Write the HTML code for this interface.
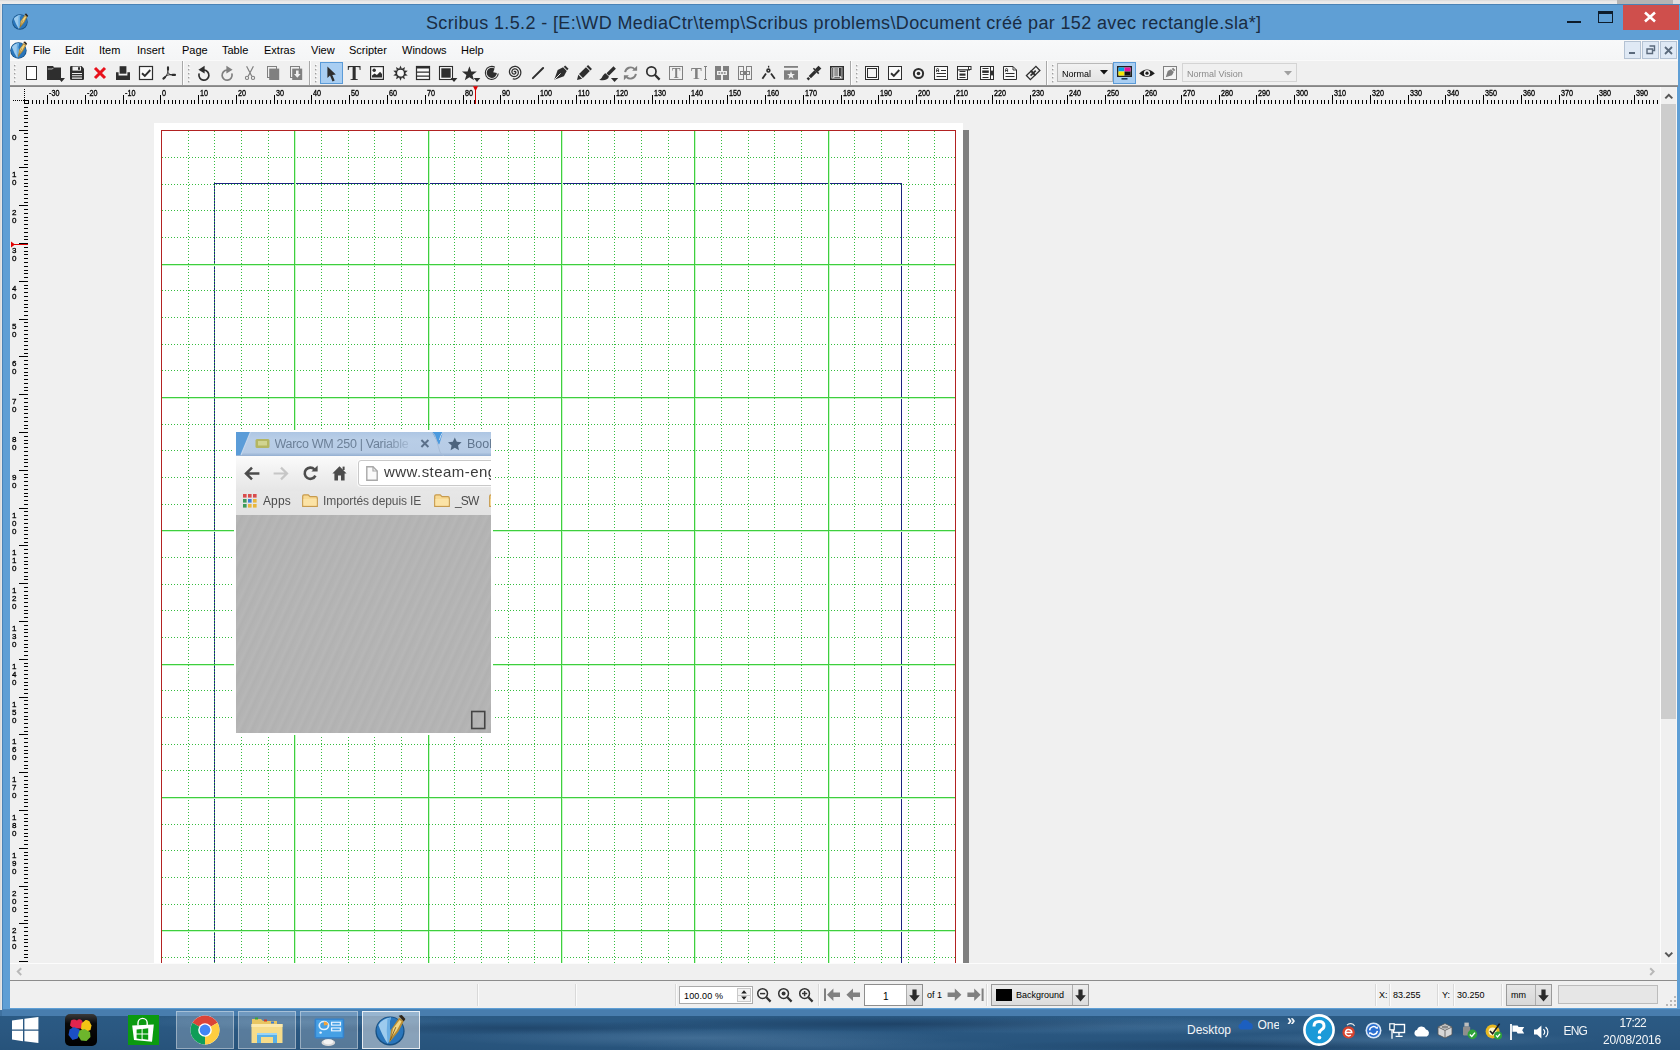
<!DOCTYPE html>
<html><head><meta charset="utf-8"><title>Scribus</title>
<style>
*{box-sizing:border-box;margin:0;padding:0}
html,body{width:1680px;height:1050px;overflow:hidden;background:#f0f0f0}
body{position:relative;font-family:"Liberation Sans",sans-serif;font-size:11px;color:#000}
.a{position:absolute}
.t{position:absolute;white-space:nowrap;line-height:1}
svg{position:absolute;overflow:visible}
#w{position:absolute;left:0;top:0;width:1680px;height:1050px;opacity:0.999}
</style></head>
<body><div id="w">
<div class="a" style="left:0px;top:0px;width:1680px;height:4px;background:linear-gradient(#d9d9d9,#e9e9e9 40%,#ececec)"></div>
<div class="a" style="left:1617px;top:0px;width:56px;height:4px;background:#b4b4b4"></div>
<div class="a" style="left:1673px;top:0px;width:7px;height:4px;background:#dcdcdc"></div>
<div class="a" style="left:0px;top:4px;width:2px;height:1006px;background:linear-gradient(90deg,#d8d8d8,#ececec)"></div>
<div class="a" style="left:2px;top:4px;width:1678px;height:1006px;background:#5f9fd5;border:1px solid #4a83b6;border-right:none"></div>
<div class="t" style="left:426px;top:14px;font-size:18px;color:#1a2c42;letter-spacing:0.365px">Scribus 1.5.2 - [E:\WD MediaCtr\temp\Scribus problems\Document créé par 152 avec rectangle.sla*]</div>
<div class="a" style="left:1567px;top:21px;width:14px;height:2px;background:#0d1c2b"></div>
<div class="a" style="left:1598px;top:11px;width:15px;height:12px;border:1px solid #0d1c2b;border-top-width:3px"></div>
<div class="a" style="left:1623px;top:5px;width:56px;height:25px;background:#cf4f4c"></div>
<svg style="left:1644px;top:12px" width="12" height="10" viewBox="0 0 12 10" ><path d="M1 0.5 L11 9.5 M11 0.5 L1 9.5" stroke="#fff" stroke-width="2.6" fill="none"/></svg>
<div class="a" style="left:10px;top:40px;width:1668px;height:21px;background:linear-gradient(#f8f9fa,#f4f5f6)"></div>
<div class="t" style="left:33px;top:45px;font-size:11px;color:#000;">File</div>
<div class="t" style="left:65px;top:45px;font-size:11px;color:#000;">Edit</div>
<div class="t" style="left:99px;top:45px;font-size:11px;color:#000;">Item</div>
<div class="t" style="left:137px;top:45px;font-size:11px;color:#000;">Insert</div>
<div class="t" style="left:182px;top:45px;font-size:11px;color:#000;">Page</div>
<div class="t" style="left:222px;top:45px;font-size:11px;color:#000;">Table</div>
<div class="t" style="left:264px;top:45px;font-size:11px;color:#000;">Extras</div>
<div class="t" style="left:311px;top:45px;font-size:11px;color:#000;">View</div>
<div class="t" style="left:349px;top:45px;font-size:11px;color:#000;">Scripter</div>
<div class="t" style="left:402px;top:45px;font-size:11px;color:#000;">Windows</div>
<div class="t" style="left:461px;top:45px;font-size:11px;color:#000;">Help</div>
<div class="a" style="left:1624px;top:41px;width:17px;height:18px;background:#dfe9f5;border:1px solid #b4c2d3"></div>
<div class="a" style="left:1642px;top:41px;width:17px;height:18px;background:#dfe9f5;border:1px solid #b4c2d3"></div>
<div class="a" style="left:1660px;top:41px;width:17px;height:18px;background:#dfe9f5;border:1px solid #b4c2d3"></div>
<div class="a" style="left:1629px;top:52px;width:6px;height:2px;background:#5b6a7c"></div>
<svg style="left:1646px;top:45px" width="10" height="10" viewBox="0 0 10 10" ><path d="M3.5 1h5v4.5h-2M1 4h5.5v4.5H1z" stroke="#5b6a7c" stroke-width="1.4" fill="none"/></svg>
<svg style="left:1664px;top:46px" width="9" height="9" viewBox="0 0 9 9" ><path d="M1 1l7 7M8 1l-7 7" stroke="#5b6a7c" stroke-width="1.8" fill="none"/></svg>
<div class="a" style="left:10px;top:61px;width:1668px;height:25px;background:#f0f0f0"></div>
<div class="a" style="left:10px;top:85px;width:1668px;height:2px;background:linear-gradient(#9a9a9a,#7e7e7e)"></div>
<div class="a" style="left:10px;top:87px;width:1667px;height:921px;background:#f0f0f0"></div>
<svg style="left:10px;top:87px" width="1650" height="876" viewBox="0 0 1650 876" ><rect x="144" y="36" width="809" height="840" fill="#fff"/><rect x="953" y="43" width="6" height="833" fill="#808080"/><path d="M204.5 876V96.5H891.5V876" stroke="#1a237e" stroke-width="1" fill="none" shape-rendering="crispEdges"/><path d="M151.5 876V43.5H945.5V876" stroke="#b22222" stroke-width="1" fill="none" shape-rendering="crispEdges"/><path d="M285.5 44V876M419.5 44V876M552.5 44V876M685.5 44V876M819.5 44V876M152 178.5H945M152 311.5H945M152 444.5H945M152 578.5H945M152 711.5H945M152 844.5H945" stroke="#c8f8c8" stroke-width="1" fill="none" shape-rendering="crispEdges"/><path d="M178.5 44V876M204.5 44V876M231.5 44V876M258.5 44V876M311.5 44V876M338.5 44V876M364.5 44V876M391.5 44V876M444.5 44V876M471.5 44V876M498.5 44V876M524.5 44V876M578.5 44V876M604.5 44V876M631.5 44V876M658.5 44V876M711.5 44V876M738.5 44V876M764.5 44V876M791.5 44V876M844.5 44V876M871.5 44V876M898.5 44V876M924.5 44V876" stroke="#35bd3f" stroke-width="1" stroke-dasharray="1 2" fill="none" shape-rendering="crispEdges"/><path d="M152 70.5H945M152 97.5H945M152 123.5H945M152 150.5H945M152 203.5H945M152 230.5H945M152 257.5H945M152 283.5H945M152 337.5H945M152 363.5H945M152 390.5H945M152 417.5H945M152 470.5H945M152 497.5H945M152 523.5H945M152 550.5H945M152 603.5H945M152 630.5H945M152 657.5H945M152 683.5H945M152 737.5H945M152 763.5H945M152 790.5H945M152 817.5H945M152 870.5H945" stroke="#35bd3f" stroke-width="1" stroke-dasharray="1 2" fill="none" shape-rendering="crispEdges"/><path d="M284.5 44V876M418.5 44V876M551.5 44V876M684.5 44V876M818.5 44V876M152 177.5H945M152 310.5H945M152 443.5H945M152 577.5H945M152 710.5H945M152 843.5H945" stroke="#3fce3f" stroke-width="1" fill="none" shape-rendering="crispEdges"/></svg>
<div class="a" style="left:236px;top:432px;width:255px;height:301px;overflow:hidden;box-shadow:0 0 0 2px #fff;background:#b4b4b4"><div class="a" style="left:0;top:0;width:255px;height:301px;filter:blur(0.45px)"><div class="a" style="left:0px;top:83px;width:255px;height:218px;background:repeating-linear-gradient(115deg,#b3b3b3 0px,#b7b7b7 3px,#b1b1b1 6px,#b4b4b4 9px)"></div><div class="a" style="left:0px;top:0px;width:255px;height:24px;background:linear-gradient(#aec6e3,#b9cee7 30%,#b6cbe5 85%,#93aed0)"></div><svg style="left:0px;top:0px" width="255" height="24" viewBox="0 0 255 24"><path d="M0 0H14.5L5 23H0z" fill="#5b9cd8"/><path d="M14.5 0L5 23" stroke="#c4d6ec" stroke-width="1.2"/><path d="M196 0h11l-3.4 11.5q-.8 2-1.4-.2z" fill="#4b9ade"/><path d="M196 0Q199 2 200.4 8L204 20Q205 23 208 23.5" stroke="#a8bdd8" stroke-width="1" fill="none"/><path d="M207 0Q204.6 3 203.4 8" stroke="#c6d8ee" stroke-width="1" fill="none"/><rect x="19.5" y="7" width="14" height="9" rx="1.5" fill="#b4b662"/><rect x="22" y="9" width="9" height="4.5" fill="#d8dc9c" opacity=".8"/><path d="M185.4 8l7 7M192.4 8l-7 7" stroke="#5b708a" stroke-width="1.9"/><path d="M218.8 5.4l2 4.4 4.8.5-3.6 3.2 1 4.7-4.2-2.4-4.2 2.4 1-4.7-3.6-3.2 4.8-.5z" fill="#4d647e"/></svg><div class="t" style="left:38.5px;top:6px;font-size:12.5px;color:#6c8098;letter-spacing:-0.3px;-webkit-mask-image:linear-gradient(90deg,#000 82%,rgba(0,0,0,.25) 100%)">Warco WM 250 | Variable</div><div class="t" style="left:231px;top:6px;font-size:12.5px;color:#60758e;">Bookmarks</div><div class="a" style="left:0px;top:24px;width:255px;height:35px;background:linear-gradient(#fbfbfb,#f1f1f1 45%,#e6e6e6)"></div><div class="a" style="left:122px;top:28px;width:140px;height:26px;background:#fff;border:1px solid #c9c9c9;border-radius:3px;box-shadow:0 0 0 1px rgba(255,255,255,.7)"></div><svg style="left:8px;top:34px" width="16" height="15" viewBox="0 0 16 15"><path d="M8 1.6L2 7.5 8 13.4M2.4 7.5H15.4" stroke="#4c4c4c" stroke-width="2.5" fill="none"/></svg><svg style="left:37px;top:34px" width="16" height="15" viewBox="0 0 16 15"><path d="M8 1.6L14 7.5 8 13.4M13.6 7.5H0.6" stroke="#c6c6c6" stroke-width="2.2" fill="none"/></svg><svg style="left:66px;top:33px" width="17" height="17" viewBox="0 0 17 17"><path d="M13.4 10.6A5.6 5.6 0 1 1 12.4 4.4" stroke="#4c4c4c" stroke-width="2.6" fill="none"/><path d="M9.4 6.6H15.6V0.6z" fill="#4c4c4c"/></svg><svg style="left:96px;top:33px" width="15" height="16" viewBox="0 0 15 16"><path d="M0.4 8.4L7.5 1.2 14.6 8.4H12.6V15.4H9V10.6H6V15.4H2.4V8.4z" fill="#4c4c4c"/><rect x="10.6" y="1.6" width="2" height="3.4" fill="#4c4c4c"/></svg><svg style="left:130px;top:34px" width="12" height="15" viewBox="0 0 12 15"><path d="M0.8 0.8H7L11.2 5V14.2H0.8z" fill="#fafafa" stroke="#a8a8a8" stroke-width="1.4"/><path d="M7 0.8V5h4.2" fill="none" stroke="#a8a8a8" stroke-width="1.2"/></svg><div class="t" style="left:148px;top:32px;font-size:15px;color:#3c3c3c;letter-spacing:0.45px">www.steam-eng</div><div class="a" style="left:0px;top:59px;width:255px;height:24px;background:linear-gradient(#e7e7e7,#e2e2e2)"></div><svg style="left:7px;top:62px" width="14" height="14" viewBox="0 0 14 14"><rect x="0" y="0" width="3.6" height="3.6" fill="#d94c4c"/><rect x="5" y="0" width="3.6" height="3.6" fill="#d94c4c"/><rect x="10" y="0" width="3.6" height="3.6" fill="#d94c4c"/><rect x="0" y="5" width="3.6" height="3.6" fill="#3d9a5a"/><rect x="5" y="5" width="3.6" height="3.6" fill="#3f7fd6"/><rect x="10" y="5" width="3.6" height="3.6" fill="#e8b63c"/><rect x="0" y="10" width="3.6" height="3.6" fill="#3d9a5a"/><rect x="5" y="10" width="3.6" height="3.6" fill="#e8b63c"/><rect x="10" y="10" width="3.6" height="3.6" fill="#e8b63c"/></svg><div class="t" style="left:27px;top:63px;font-size:12px;color:#4a4a4a;letter-spacing:0.1px">Apps</div><svg style="left:65.5px;top:62px" width="16" height="13" viewBox="0 0 16 13"><path d="M0.7 12.3V2.2Q0.7 0.8 2 0.8H6.2L8 2.6H14Q15.3 2.6 15.3 4V12.3z" fill="#f8d992" stroke="#c79b4e" stroke-width="1.2"/><path d="M1.4 5h13.2v6.6H1.4z" fill="#fbe3a6"/></svg><div class="t" style="left:87px;top:63px;font-size:12px;color:#555;letter-spacing:-0.1px">Importés depuis IE</div><svg style="left:197.5px;top:62px" width="16" height="13" viewBox="0 0 16 13"><path d="M0.7 12.3V2.2Q0.7 0.8 2 0.8H6.2L8 2.6H14Q15.3 2.6 15.3 4V12.3z" fill="#f8d992" stroke="#c79b4e" stroke-width="1.2"/><path d="M1.4 5h13.2v6.6H1.4z" fill="#fbe3a6"/></svg><div class="t" style="left:219px;top:63px;font-size:12px;color:#4a4a4a;letter-spacing:-0.9px">_SW</div><svg style="left:252.5px;top:62px" width="16" height="13" viewBox="0 0 16 13"><path d="M0.7 12.3V2.2Q0.7 0.8 2 0.8H6.2L8 2.6H14Q15.3 2.6 15.3 4V12.3z" fill="#f8d992" stroke="#c79b4e" stroke-width="1.2"/><path d="M1.4 5h13.2v6.6H1.4z" fill="#fbe3a6"/></svg><svg style="left:234px;top:278px" width="17" height="20" viewBox="0 0 17 20"><rect x="1.75" y="1.5" width="13" height="17" fill="none" stroke="#444" stroke-width="1.6"/></svg></div></div>
<svg style="left:0px;top:0px" width="1680" height="1050" viewBox="0 0 1680 1050" ><path d="M32.5 100V104M36.5 100V104M39.5 100V104M43.5 100V104M51.5 100V104M54.5 100V104M58.5 100V104M62.5 100V104M66.5 100V104M70.5 100V104M73.5 100V104M77.5 100V104M81.5 100V104M88.5 100V104M92.5 100V104M96.5 100V104M100.5 100V104M104.5 100V104M107.5 100V104M111.5 100V104M115.5 100V104M119.5 100V104M126.5 100V104M130.5 100V104M134.5 100V104M138.5 100V104M141.5 100V104M145.5 100V104M149.5 100V104M153.5 100V104M157.5 100V104M164.5 100V104M168.5 100V104M172.5 100V104M175.5 100V104M179.5 100V104M183.5 100V104M187.5 100V104M191.5 100V104M194.5 100V104M202.5 100V104M206.5 100V104M209.5 100V104M213.5 100V104M217.5 100V104M221.5 100V104M225.5 100V104M228.5 100V104M232.5 100V104M240.5 100V104M243.5 100V104M247.5 100V104M251.5 100V104M255.5 100V104M259.5 100V104M262.5 100V104M266.5 100V104M270.5 100V104M277.5 100V104M281.5 100V104M285.5 100V104M289.5 100V104M293.5 100V104M296.5 100V104M300.5 100V104M304.5 100V104M308.5 100V104M315.5 100V104M319.5 100V104M323.5 100V104M327.5 100V104M330.5 100V104M334.5 100V104M338.5 100V104M342.5 100V104M345.5 100V104M353.5 100V104M357.5 100V104M361.5 100V104M364.5 100V104M368.5 100V104M372.5 100V104M376.5 100V104M380.5 100V104M383.5 100V104M391.5 100V104M395.5 100V104M398.5 100V104M402.5 100V104M406.5 100V104M410.5 100V104M414.5 100V104M417.5 100V104M421.5 100V104M429.5 100V104M432.5 100V104M436.5 100V104M440.5 100V104M444.5 100V104M448.5 100V104M451.5 100V104M455.5 100V104M459.5 100V104M466.5 100V104M470.5 100V104M474.5 100V104M478.5 100V104M482.5 100V104M485.5 100V104M489.5 100V104M493.5 100V104M497.5 100V104M504.5 100V104M508.5 100V104M512.5 100V104M516.5 100V104M519.5 100V104M523.5 100V104M527.5 100V104M531.5 100V104M534.5 100V104M542.5 100V104M546.5 100V104M550.5 100V104M553.5 100V104M557.5 100V104M561.5 100V104M565.5 100V104M568.5 100V104M572.5 100V104M580.5 100V104M584.5 100V104M587.5 100V104M591.5 100V104M595.5 100V104M599.5 100V104M603.5 100V104M606.5 100V104M610.5 100V104M618.5 100V104M621.5 100V104M625.5 100V104M629.5 100V104M633.5 100V104M637.5 100V104M640.5 100V104M644.5 100V104M648.5 100V104M655.5 100V104M659.5 100V104M663.5 100V104M667.5 100V104M671.5 100V104M674.5 100V104M678.5 100V104M682.5 100V104M686.5 100V104M693.5 100V104M697.5 100V104M701.5 100V104M705.5 100V104M708.5 100V104M712.5 100V104M716.5 100V104M720.5 100V104M723.5 100V104M731.5 100V104M735.5 100V104M739.5 100V104M742.5 100V104M746.5 100V104M750.5 100V104M754.5 100V104M757.5 100V104M761.5 100V104M769.5 100V104M773.5 100V104M776.5 100V104M780.5 100V104M784.5 100V104M788.5 100V104M791.5 100V104M795.5 100V104M799.5 100V104M807.5 100V104M810.5 100V104M814.5 100V104M818.5 100V104M822.5 100V104M825.5 100V104M829.5 100V104M833.5 100V104M837.5 100V104M844.5 100V104M848.5 100V104M852.5 100V104M856.5 100V104M860.5 100V104M863.5 100V104M867.5 100V104M871.5 100V104M875.5 100V104M882.5 100V104M886.5 100V104M890.5 100V104M894.5 100V104M897.5 100V104M901.5 100V104M905.5 100V104M909.5 100V104M912.5 100V104M920.5 100V104M924.5 100V104M928.5 100V104M931.5 100V104M935.5 100V104M939.5 100V104M943.5 100V104M946.5 100V104M950.5 100V104M958.5 100V104M962.5 100V104M965.5 100V104M969.5 100V104M973.5 100V104M977.5 100V104M980.5 100V104M984.5 100V104M988.5 100V104M996.5 100V104M999.5 100V104M1003.5 100V104M1007.5 100V104M1011.5 100V104M1014.5 100V104M1018.5 100V104M1022.5 100V104M1026.5 100V104M1033.5 100V104M1037.5 100V104M1041.5 100V104M1045.5 100V104M1048.5 100V104M1052.5 100V104M1056.5 100V104M1060.5 100V104M1064.5 100V104M1071.5 100V104M1075.5 100V104M1079.5 100V104M1083.5 100V104M1086.5 100V104M1090.5 100V104M1094.5 100V104M1098.5 100V104M1101.5 100V104M1109.5 100V104M1113.5 100V104M1117.5 100V104M1120.5 100V104M1124.5 100V104M1128.5 100V104M1132.5 100V104M1135.5 100V104M1139.5 100V104M1147.5 100V104M1151.5 100V104M1154.5 100V104M1158.5 100V104M1162.5 100V104M1166.5 100V104M1169.5 100V104M1173.5 100V104M1177.5 100V104M1185.5 100V104M1188.5 100V104M1192.5 100V104M1196.5 100V104M1200.5 100V104M1203.5 100V104M1207.5 100V104M1211.5 100V104M1215.5 100V104M1222.5 100V104M1226.5 100V104M1230.5 100V104M1234.5 100V104M1237.5 100V104M1241.5 100V104M1245.5 100V104M1249.5 100V104M1253.5 100V104M1260.5 100V104M1264.5 100V104M1268.5 100V104M1271.5 100V104M1275.5 100V104M1279.5 100V104M1283.5 100V104M1287.5 100V104M1290.5 100V104M1298.5 100V104M1302.5 100V104M1305.5 100V104M1309.5 100V104M1313.5 100V104M1317.5 100V104M1321.5 100V104M1324.5 100V104M1328.5 100V104M1336.5 100V104M1340.5 100V104M1343.5 100V104M1347.5 100V104M1351.5 100V104M1355.5 100V104M1358.5 100V104M1362.5 100V104M1366.5 100V104M1374.5 100V104M1377.5 100V104M1381.5 100V104M1385.5 100V104M1389.5 100V104M1392.5 100V104M1396.5 100V104M1400.5 100V104M1404.5 100V104M1411.5 100V104M1415.5 100V104M1419.5 100V104M1423.5 100V104M1426.5 100V104M1430.5 100V104M1434.5 100V104M1438.5 100V104M1442.5 100V104M1449.5 100V104M1453.5 100V104M1457.5 100V104M1460.5 100V104M1464.5 100V104M1468.5 100V104M1472.5 100V104M1476.5 100V104M1479.5 100V104M1487.5 100V104M1491.5 100V104M1494.5 100V104M1498.5 100V104M1502.5 100V104M1506.5 100V104M1510.5 100V104M1513.5 100V104M1517.5 100V104M1525.5 100V104M1528.5 100V104M1532.5 100V104M1536.5 100V104M1540.5 100V104M1544.5 100V104M1547.5 100V104M1551.5 100V104M1555.5 100V104M1563.5 100V104M1566.5 100V104M1570.5 100V104M1574.5 100V104M1578.5 100V104M1581.5 100V104M1585.5 100V104M1589.5 100V104M1593.5 100V104M1600.5 100V104M1604.5 100V104M1608.5 100V104M1612.5 100V104M1615.5 100V104M1619.5 100V104M1623.5 100V104M1627.5 100V104M1631.5 100V104M1638.5 100V104M1642.5 100V104M1646.5 100V104M1649.5 100V104M1653.5 100V104M1657.5 100V104M47.5 95V104M85.5 95V104M123.5 95V104M160.5 95V104M198.5 95V104M236.5 95V104M274.5 95V104M311.5 95V104M349.5 95V104M387.5 95V104M425.5 95V104M463.5 95V104M500.5 95V104M538.5 95V104M576.5 95V104M614.5 95V104M652.5 95V104M689.5 95V104M727.5 95V104M765.5 95V104M803.5 95V104M841.5 95V104M878.5 95V104M916.5 95V104M954.5 95V104M992.5 95V104M1030.5 95V104M1067.5 95V104M1105.5 95V104M1143.5 95V104M1181.5 95V104M1219.5 95V104M1256.5 95V104M1294.5 95V104M1332.5 95V104M1370.5 95V104M1408.5 95V104M1445.5 95V104M1483.5 95V104M1521.5 95V104M1559.5 95V104M1597.5 95V104M1634.5 95V104" stroke="#000" stroke-width="1" fill="none" shape-rendering="crispEdges"/><path d="M13 100.5H24M24.5 89V100" stroke="#000" stroke-width="1" stroke-dasharray="1 1" fill="none" shape-rendering="crispEdges"/><rect x="24.5" y="100.5" width="4" height="3" fill="none" stroke="#000" stroke-width="1" shape-rendering="crispEdges"/><path d="M475.5 87V104" stroke="#d40000" stroke-width="1" shape-rendering="crispEdges"/><path d="M473 86.2h5l-2.5 5z" fill="#e00000"/><path d="M24 107.5H28M24 111.5H28M24 115.5H28M24 118.5H28M24 122.5H28M24 126.5H28M19 130.5H28M24 133.5H28M24 137.5H28M24 141.5H28M24 145.5H28M24 149.5H28M24 152.5H28M24 156.5H28M24 160.5H28M24 164.5H28M19 167.5H28M24 171.5H28M24 175.5H28M24 179.5H28M24 183.5H28M24 186.5H28M24 190.5H28M24 194.5H28M24 198.5H28M24 202.5H28M19 205.5H28M24 209.5H28M24 213.5H28M24 217.5H28M24 220.5H28M24 224.5H28M24 228.5H28M24 232.5H28M24 236.5H28M24 239.5H28M19 243.5H28M24 247.5H28M24 251.5H28M24 254.5H28M24 258.5H28M24 262.5H28M24 266.5H28M24 270.5H28M24 273.5H28M24 277.5H28M19 281.5H28M24 285.5H28M24 288.5H28M24 292.5H28M24 296.5H28M24 300.5H28M24 304.5H28M24 307.5H28M24 311.5H28M24 315.5H28M19 319.5H28M24 322.5H28M24 326.5H28M24 330.5H28M24 334.5H28M24 338.5H28M24 341.5H28M24 345.5H28M24 349.5H28M24 353.5H28M19 356.5H28M24 360.5H28M24 364.5H28M24 368.5H28M24 372.5H28M24 375.5H28M24 379.5H28M24 383.5H28M24 387.5H28M24 390.5H28M19 394.5H28M24 398.5H28M24 402.5H28M24 406.5H28M24 409.5H28M24 413.5H28M24 417.5H28M24 421.5H28M24 425.5H28M24 428.5H28M19 432.5H28M24 436.5H28M24 440.5H28M24 443.5H28M24 447.5H28M24 451.5H28M24 455.5H28M24 459.5H28M24 462.5H28M24 466.5H28M19 470.5H28M24 474.5H28M24 477.5H28M24 481.5H28M24 485.5H28M24 489.5H28M24 493.5H28M24 496.5H28M24 500.5H28M24 504.5H28M19 508.5H28M24 511.5H28M24 515.5H28M24 519.5H28M24 523.5H28M24 527.5H28M24 530.5H28M24 534.5H28M24 538.5H28M24 542.5H28M19 545.5H28M24 549.5H28M24 553.5H28M24 557.5H28M24 561.5H28M24 564.5H28M24 568.5H28M24 572.5H28M24 576.5H28M24 579.5H28M19 583.5H28M24 587.5H28M24 591.5H28M24 595.5H28M24 598.5H28M24 602.5H28M24 606.5H28M24 610.5H28M24 613.5H28M24 617.5H28M19 621.5H28M24 625.5H28M24 629.5H28M24 632.5H28M24 636.5H28M24 640.5H28M24 644.5H28M24 647.5H28M24 651.5H28M24 655.5H28M19 659.5H28M24 663.5H28M24 666.5H28M24 670.5H28M24 674.5H28M24 678.5H28M24 682.5H28M24 685.5H28M24 689.5H28M24 693.5H28M19 697.5H28M24 700.5H28M24 704.5H28M24 708.5H28M24 712.5H28M24 716.5H28M24 719.5H28M24 723.5H28M24 727.5H28M24 731.5H28M19 734.5H28M24 738.5H28M24 742.5H28M24 746.5H28M24 750.5H28M24 753.5H28M24 757.5H28M24 761.5H28M24 765.5H28M24 768.5H28M19 772.5H28M24 776.5H28M24 780.5H28M24 784.5H28M24 787.5H28M24 791.5H28M24 795.5H28M24 799.5H28M24 802.5H28M24 806.5H28M19 810.5H28M24 814.5H28M24 818.5H28M24 821.5H28M24 825.5H28M24 829.5H28M24 833.5H28M24 836.5H28M24 840.5H28M24 844.5H28M19 848.5H28M24 852.5H28M24 855.5H28M24 859.5H28M24 863.5H28M24 867.5H28M24 870.5H28M24 874.5H28M24 878.5H28M24 882.5H28M19 886.5H28M24 889.5H28M24 893.5H28M24 897.5H28M24 901.5H28M24 905.5H28M24 908.5H28M24 912.5H28M24 916.5H28M24 920.5H28M19 923.5H28M24 927.5H28M24 931.5H28M24 935.5H28M24 939.5H28M24 942.5H28M24 946.5H28M24 950.5H28M24 954.5H28M24 957.5H28M19 961.5H28" stroke="#000" stroke-width="1" fill="none" shape-rendering="crispEdges"/><path d="M11 244.5H28" stroke="#e00000" stroke-width="1" shape-rendering="crispEdges"/><path d="M11 241.5v6l4-3z" fill="#e00000"/></svg>
<div class="t" style="left:49px;top:89px;font-size:8px;color:#000;transform:scale(0.9,1.1);transform-origin:0 0;-webkit-text-stroke:0.3px #000">-30</div>
<div class="t" style="left:87px;top:89px;font-size:8px;color:#000;transform:scale(0.9,1.1);transform-origin:0 0;-webkit-text-stroke:0.3px #000">-20</div>
<div class="t" style="left:125px;top:89px;font-size:8px;color:#000;transform:scale(0.9,1.1);transform-origin:0 0;-webkit-text-stroke:0.3px #000">-10</div>
<div class="t" style="left:162px;top:89px;font-size:8px;color:#000;transform:scale(0.9,1.1);transform-origin:0 0;-webkit-text-stroke:0.3px #000">0</div>
<div class="t" style="left:200px;top:89px;font-size:8px;color:#000;transform:scale(0.9,1.1);transform-origin:0 0;-webkit-text-stroke:0.3px #000">10</div>
<div class="t" style="left:238px;top:89px;font-size:8px;color:#000;transform:scale(0.9,1.1);transform-origin:0 0;-webkit-text-stroke:0.3px #000">20</div>
<div class="t" style="left:276px;top:89px;font-size:8px;color:#000;transform:scale(0.9,1.1);transform-origin:0 0;-webkit-text-stroke:0.3px #000">30</div>
<div class="t" style="left:313px;top:89px;font-size:8px;color:#000;transform:scale(0.9,1.1);transform-origin:0 0;-webkit-text-stroke:0.3px #000">40</div>
<div class="t" style="left:351px;top:89px;font-size:8px;color:#000;transform:scale(0.9,1.1);transform-origin:0 0;-webkit-text-stroke:0.3px #000">50</div>
<div class="t" style="left:389px;top:89px;font-size:8px;color:#000;transform:scale(0.9,1.1);transform-origin:0 0;-webkit-text-stroke:0.3px #000">60</div>
<div class="t" style="left:427px;top:89px;font-size:8px;color:#000;transform:scale(0.9,1.1);transform-origin:0 0;-webkit-text-stroke:0.3px #000">70</div>
<div class="t" style="left:465px;top:89px;font-size:8px;color:#000;transform:scale(0.9,1.1);transform-origin:0 0;-webkit-text-stroke:0.3px #000">80</div>
<div class="t" style="left:502px;top:89px;font-size:8px;color:#000;transform:scale(0.9,1.1);transform-origin:0 0;-webkit-text-stroke:0.3px #000">90</div>
<div class="t" style="left:540px;top:89px;font-size:8px;color:#000;transform:scale(0.9,1.1);transform-origin:0 0;-webkit-text-stroke:0.3px #000">100</div>
<div class="t" style="left:578px;top:89px;font-size:8px;color:#000;transform:scale(0.9,1.1);transform-origin:0 0;-webkit-text-stroke:0.3px #000">110</div>
<div class="t" style="left:616px;top:89px;font-size:8px;color:#000;transform:scale(0.9,1.1);transform-origin:0 0;-webkit-text-stroke:0.3px #000">120</div>
<div class="t" style="left:654px;top:89px;font-size:8px;color:#000;transform:scale(0.9,1.1);transform-origin:0 0;-webkit-text-stroke:0.3px #000">130</div>
<div class="t" style="left:691px;top:89px;font-size:8px;color:#000;transform:scale(0.9,1.1);transform-origin:0 0;-webkit-text-stroke:0.3px #000">140</div>
<div class="t" style="left:729px;top:89px;font-size:8px;color:#000;transform:scale(0.9,1.1);transform-origin:0 0;-webkit-text-stroke:0.3px #000">150</div>
<div class="t" style="left:767px;top:89px;font-size:8px;color:#000;transform:scale(0.9,1.1);transform-origin:0 0;-webkit-text-stroke:0.3px #000">160</div>
<div class="t" style="left:805px;top:89px;font-size:8px;color:#000;transform:scale(0.9,1.1);transform-origin:0 0;-webkit-text-stroke:0.3px #000">170</div>
<div class="t" style="left:843px;top:89px;font-size:8px;color:#000;transform:scale(0.9,1.1);transform-origin:0 0;-webkit-text-stroke:0.3px #000">180</div>
<div class="t" style="left:880px;top:89px;font-size:8px;color:#000;transform:scale(0.9,1.1);transform-origin:0 0;-webkit-text-stroke:0.3px #000">190</div>
<div class="t" style="left:918px;top:89px;font-size:8px;color:#000;transform:scale(0.9,1.1);transform-origin:0 0;-webkit-text-stroke:0.3px #000">200</div>
<div class="t" style="left:956px;top:89px;font-size:8px;color:#000;transform:scale(0.9,1.1);transform-origin:0 0;-webkit-text-stroke:0.3px #000">210</div>
<div class="t" style="left:994px;top:89px;font-size:8px;color:#000;transform:scale(0.9,1.1);transform-origin:0 0;-webkit-text-stroke:0.3px #000">220</div>
<div class="t" style="left:1032px;top:89px;font-size:8px;color:#000;transform:scale(0.9,1.1);transform-origin:0 0;-webkit-text-stroke:0.3px #000">230</div>
<div class="t" style="left:1069px;top:89px;font-size:8px;color:#000;transform:scale(0.9,1.1);transform-origin:0 0;-webkit-text-stroke:0.3px #000">240</div>
<div class="t" style="left:1107px;top:89px;font-size:8px;color:#000;transform:scale(0.9,1.1);transform-origin:0 0;-webkit-text-stroke:0.3px #000">250</div>
<div class="t" style="left:1145px;top:89px;font-size:8px;color:#000;transform:scale(0.9,1.1);transform-origin:0 0;-webkit-text-stroke:0.3px #000">260</div>
<div class="t" style="left:1183px;top:89px;font-size:8px;color:#000;transform:scale(0.9,1.1);transform-origin:0 0;-webkit-text-stroke:0.3px #000">270</div>
<div class="t" style="left:1221px;top:89px;font-size:8px;color:#000;transform:scale(0.9,1.1);transform-origin:0 0;-webkit-text-stroke:0.3px #000">280</div>
<div class="t" style="left:1258px;top:89px;font-size:8px;color:#000;transform:scale(0.9,1.1);transform-origin:0 0;-webkit-text-stroke:0.3px #000">290</div>
<div class="t" style="left:1296px;top:89px;font-size:8px;color:#000;transform:scale(0.9,1.1);transform-origin:0 0;-webkit-text-stroke:0.3px #000">300</div>
<div class="t" style="left:1334px;top:89px;font-size:8px;color:#000;transform:scale(0.9,1.1);transform-origin:0 0;-webkit-text-stroke:0.3px #000">310</div>
<div class="t" style="left:1372px;top:89px;font-size:8px;color:#000;transform:scale(0.9,1.1);transform-origin:0 0;-webkit-text-stroke:0.3px #000">320</div>
<div class="t" style="left:1410px;top:89px;font-size:8px;color:#000;transform:scale(0.9,1.1);transform-origin:0 0;-webkit-text-stroke:0.3px #000">330</div>
<div class="t" style="left:1447px;top:89px;font-size:8px;color:#000;transform:scale(0.9,1.1);transform-origin:0 0;-webkit-text-stroke:0.3px #000">340</div>
<div class="t" style="left:1485px;top:89px;font-size:8px;color:#000;transform:scale(0.9,1.1);transform-origin:0 0;-webkit-text-stroke:0.3px #000">350</div>
<div class="t" style="left:1523px;top:89px;font-size:8px;color:#000;transform:scale(0.9,1.1);transform-origin:0 0;-webkit-text-stroke:0.3px #000">360</div>
<div class="t" style="left:1561px;top:89px;font-size:8px;color:#000;transform:scale(0.9,1.1);transform-origin:0 0;-webkit-text-stroke:0.3px #000">370</div>
<div class="t" style="left:1599px;top:89px;font-size:8px;color:#000;transform:scale(0.9,1.1);transform-origin:0 0;-webkit-text-stroke:0.3px #000">380</div>
<div class="t" style="left:1636px;top:89px;font-size:8px;color:#000;transform:scale(0.9,1.1);transform-origin:0 0;-webkit-text-stroke:0.3px #000">390</div>
<div class="t" style="left:12px;top:133.5px;font-size:8px;color:#000;-webkit-text-stroke:0.3px #000">0</div>
<div class="t" style="left:12px;top:170.5px;font-size:8px;color:#000;-webkit-text-stroke:0.3px #000">1</div>
<div class="t" style="left:12px;top:178.5px;font-size:8px;color:#000;-webkit-text-stroke:0.3px #000">0</div>
<div class="t" style="left:12px;top:208.5px;font-size:8px;color:#000;-webkit-text-stroke:0.3px #000">2</div>
<div class="t" style="left:12px;top:216.5px;font-size:8px;color:#000;-webkit-text-stroke:0.3px #000">0</div>
<div class="t" style="left:12px;top:246.5px;font-size:8px;color:#000;-webkit-text-stroke:0.3px #000">3</div>
<div class="t" style="left:12px;top:254.5px;font-size:8px;color:#000;-webkit-text-stroke:0.3px #000">0</div>
<div class="t" style="left:12px;top:284.5px;font-size:8px;color:#000;-webkit-text-stroke:0.3px #000">4</div>
<div class="t" style="left:12px;top:292.5px;font-size:8px;color:#000;-webkit-text-stroke:0.3px #000">0</div>
<div class="t" style="left:12px;top:322.5px;font-size:8px;color:#000;-webkit-text-stroke:0.3px #000">5</div>
<div class="t" style="left:12px;top:330.5px;font-size:8px;color:#000;-webkit-text-stroke:0.3px #000">0</div>
<div class="t" style="left:12px;top:359.5px;font-size:8px;color:#000;-webkit-text-stroke:0.3px #000">6</div>
<div class="t" style="left:12px;top:367.5px;font-size:8px;color:#000;-webkit-text-stroke:0.3px #000">0</div>
<div class="t" style="left:12px;top:397.5px;font-size:8px;color:#000;-webkit-text-stroke:0.3px #000">7</div>
<div class="t" style="left:12px;top:405.5px;font-size:8px;color:#000;-webkit-text-stroke:0.3px #000">0</div>
<div class="t" style="left:12px;top:435.5px;font-size:8px;color:#000;-webkit-text-stroke:0.3px #000">8</div>
<div class="t" style="left:12px;top:443.5px;font-size:8px;color:#000;-webkit-text-stroke:0.3px #000">0</div>
<div class="t" style="left:12px;top:473.5px;font-size:8px;color:#000;-webkit-text-stroke:0.3px #000">9</div>
<div class="t" style="left:12px;top:481.5px;font-size:8px;color:#000;-webkit-text-stroke:0.3px #000">0</div>
<div class="t" style="left:12px;top:511.5px;font-size:8px;color:#000;-webkit-text-stroke:0.3px #000">1</div>
<div class="t" style="left:12px;top:519.5px;font-size:8px;color:#000;-webkit-text-stroke:0.3px #000">0</div>
<div class="t" style="left:12px;top:527.5px;font-size:8px;color:#000;-webkit-text-stroke:0.3px #000">0</div>
<div class="t" style="left:12px;top:548.5px;font-size:8px;color:#000;-webkit-text-stroke:0.3px #000">1</div>
<div class="t" style="left:12px;top:556.5px;font-size:8px;color:#000;-webkit-text-stroke:0.3px #000">1</div>
<div class="t" style="left:12px;top:564.5px;font-size:8px;color:#000;-webkit-text-stroke:0.3px #000">0</div>
<div class="t" style="left:12px;top:586.5px;font-size:8px;color:#000;-webkit-text-stroke:0.3px #000">1</div>
<div class="t" style="left:12px;top:594.5px;font-size:8px;color:#000;-webkit-text-stroke:0.3px #000">2</div>
<div class="t" style="left:12px;top:602.5px;font-size:8px;color:#000;-webkit-text-stroke:0.3px #000">0</div>
<div class="t" style="left:12px;top:624.5px;font-size:8px;color:#000;-webkit-text-stroke:0.3px #000">1</div>
<div class="t" style="left:12px;top:632.5px;font-size:8px;color:#000;-webkit-text-stroke:0.3px #000">3</div>
<div class="t" style="left:12px;top:640.5px;font-size:8px;color:#000;-webkit-text-stroke:0.3px #000">0</div>
<div class="t" style="left:12px;top:662.5px;font-size:8px;color:#000;-webkit-text-stroke:0.3px #000">1</div>
<div class="t" style="left:12px;top:670.5px;font-size:8px;color:#000;-webkit-text-stroke:0.3px #000">4</div>
<div class="t" style="left:12px;top:678.5px;font-size:8px;color:#000;-webkit-text-stroke:0.3px #000">0</div>
<div class="t" style="left:12px;top:700.5px;font-size:8px;color:#000;-webkit-text-stroke:0.3px #000">1</div>
<div class="t" style="left:12px;top:708.5px;font-size:8px;color:#000;-webkit-text-stroke:0.3px #000">5</div>
<div class="t" style="left:12px;top:716.5px;font-size:8px;color:#000;-webkit-text-stroke:0.3px #000">0</div>
<div class="t" style="left:12px;top:737.5px;font-size:8px;color:#000;-webkit-text-stroke:0.3px #000">1</div>
<div class="t" style="left:12px;top:745.5px;font-size:8px;color:#000;-webkit-text-stroke:0.3px #000">6</div>
<div class="t" style="left:12px;top:753.5px;font-size:8px;color:#000;-webkit-text-stroke:0.3px #000">0</div>
<div class="t" style="left:12px;top:775.5px;font-size:8px;color:#000;-webkit-text-stroke:0.3px #000">1</div>
<div class="t" style="left:12px;top:783.5px;font-size:8px;color:#000;-webkit-text-stroke:0.3px #000">7</div>
<div class="t" style="left:12px;top:791.5px;font-size:8px;color:#000;-webkit-text-stroke:0.3px #000">0</div>
<div class="t" style="left:12px;top:813.5px;font-size:8px;color:#000;-webkit-text-stroke:0.3px #000">1</div>
<div class="t" style="left:12px;top:821.5px;font-size:8px;color:#000;-webkit-text-stroke:0.3px #000">8</div>
<div class="t" style="left:12px;top:829.5px;font-size:8px;color:#000;-webkit-text-stroke:0.3px #000">0</div>
<div class="t" style="left:12px;top:851.5px;font-size:8px;color:#000;-webkit-text-stroke:0.3px #000">1</div>
<div class="t" style="left:12px;top:859.5px;font-size:8px;color:#000;-webkit-text-stroke:0.3px #000">9</div>
<div class="t" style="left:12px;top:867.5px;font-size:8px;color:#000;-webkit-text-stroke:0.3px #000">0</div>
<div class="t" style="left:12px;top:889.5px;font-size:8px;color:#000;-webkit-text-stroke:0.3px #000">2</div>
<div class="t" style="left:12px;top:897.5px;font-size:8px;color:#000;-webkit-text-stroke:0.3px #000">0</div>
<div class="t" style="left:12px;top:905.5px;font-size:8px;color:#000;-webkit-text-stroke:0.3px #000">0</div>
<div class="t" style="left:12px;top:926.5px;font-size:8px;color:#000;-webkit-text-stroke:0.3px #000">2</div>
<div class="t" style="left:12px;top:934.5px;font-size:8px;color:#000;-webkit-text-stroke:0.3px #000">1</div>
<div class="t" style="left:12px;top:942.5px;font-size:8px;color:#000;-webkit-text-stroke:0.3px #000">0</div>
<div class="a" style="left:10px;top:60px;width:1668px;height:1px;background:#fafafa"></div>
<svg style="left:14px;top:61px" width="3" height="25" viewBox="0 0 3 25" ><rect x="0" y="4" width="1.4" height="1.4" fill="#9c9c9c"/><rect x="1" y="3" width="1.2" height="1.2" fill="#fff"/><rect x="0" y="8" width="1.4" height="1.4" fill="#9c9c9c"/><rect x="1" y="7" width="1.2" height="1.2" fill="#fff"/><rect x="0" y="12" width="1.4" height="1.4" fill="#9c9c9c"/><rect x="1" y="11" width="1.2" height="1.2" fill="#fff"/><rect x="0" y="16" width="1.4" height="1.4" fill="#9c9c9c"/><rect x="1" y="15" width="1.2" height="1.2" fill="#fff"/><rect x="0" y="20" width="1.4" height="1.4" fill="#9c9c9c"/><rect x="1" y="19" width="1.2" height="1.2" fill="#fff"/></svg>
<div class="a" style="left:182px;top:61px;width:1px;height:24px;background:#a8a8a8"></div>
<div class="a" style="left:183px;top:61px;width:1px;height:24px;background:#fdfdfd"></div>
<svg style="left:188px;top:61px" width="3" height="25" viewBox="0 0 3 25" ><rect x="0" y="4" width="1.4" height="1.4" fill="#9c9c9c"/><rect x="1" y="3" width="1.2" height="1.2" fill="#fff"/><rect x="0" y="8" width="1.4" height="1.4" fill="#9c9c9c"/><rect x="1" y="7" width="1.2" height="1.2" fill="#fff"/><rect x="0" y="12" width="1.4" height="1.4" fill="#9c9c9c"/><rect x="1" y="11" width="1.2" height="1.2" fill="#fff"/><rect x="0" y="16" width="1.4" height="1.4" fill="#9c9c9c"/><rect x="1" y="15" width="1.2" height="1.2" fill="#fff"/><rect x="0" y="20" width="1.4" height="1.4" fill="#9c9c9c"/><rect x="1" y="19" width="1.2" height="1.2" fill="#fff"/></svg>
<div class="a" style="left:309px;top:61px;width:1px;height:24px;background:#a8a8a8"></div>
<div class="a" style="left:310px;top:61px;width:1px;height:24px;background:#fdfdfd"></div>
<svg style="left:315px;top:61px" width="3" height="25" viewBox="0 0 3 25" ><rect x="0" y="4" width="1.4" height="1.4" fill="#9c9c9c"/><rect x="1" y="3" width="1.2" height="1.2" fill="#fff"/><rect x="0" y="8" width="1.4" height="1.4" fill="#9c9c9c"/><rect x="1" y="7" width="1.2" height="1.2" fill="#fff"/><rect x="0" y="12" width="1.4" height="1.4" fill="#9c9c9c"/><rect x="1" y="11" width="1.2" height="1.2" fill="#fff"/><rect x="0" y="16" width="1.4" height="1.4" fill="#9c9c9c"/><rect x="1" y="15" width="1.2" height="1.2" fill="#fff"/><rect x="0" y="20" width="1.4" height="1.4" fill="#9c9c9c"/><rect x="1" y="19" width="1.2" height="1.2" fill="#fff"/></svg>
<div class="a" style="left:850px;top:61px;width:1px;height:24px;background:#a8a8a8"></div>
<div class="a" style="left:851px;top:61px;width:1px;height:24px;background:#fdfdfd"></div>
<svg style="left:856px;top:61px" width="3" height="25" viewBox="0 0 3 25" ><rect x="0" y="4" width="1.4" height="1.4" fill="#9c9c9c"/><rect x="1" y="3" width="1.2" height="1.2" fill="#fff"/><rect x="0" y="8" width="1.4" height="1.4" fill="#9c9c9c"/><rect x="1" y="7" width="1.2" height="1.2" fill="#fff"/><rect x="0" y="12" width="1.4" height="1.4" fill="#9c9c9c"/><rect x="1" y="11" width="1.2" height="1.2" fill="#fff"/><rect x="0" y="16" width="1.4" height="1.4" fill="#9c9c9c"/><rect x="1" y="15" width="1.2" height="1.2" fill="#fff"/><rect x="0" y="20" width="1.4" height="1.4" fill="#9c9c9c"/><rect x="1" y="19" width="1.2" height="1.2" fill="#fff"/></svg>
<div class="a" style="left:1046px;top:61px;width:1px;height:24px;background:#a8a8a8"></div>
<div class="a" style="left:1047px;top:61px;width:1px;height:24px;background:#fdfdfd"></div>
<svg style="left:1052px;top:61px" width="3" height="25" viewBox="0 0 3 25" ><rect x="0" y="4" width="1.4" height="1.4" fill="#9c9c9c"/><rect x="1" y="3" width="1.2" height="1.2" fill="#fff"/><rect x="0" y="8" width="1.4" height="1.4" fill="#9c9c9c"/><rect x="1" y="7" width="1.2" height="1.2" fill="#fff"/><rect x="0" y="12" width="1.4" height="1.4" fill="#9c9c9c"/><rect x="1" y="11" width="1.2" height="1.2" fill="#fff"/><rect x="0" y="16" width="1.4" height="1.4" fill="#9c9c9c"/><rect x="1" y="15" width="1.2" height="1.2" fill="#fff"/><rect x="0" y="20" width="1.4" height="1.4" fill="#9c9c9c"/><rect x="1" y="19" width="1.2" height="1.2" fill="#fff"/></svg>
<svg style="left:23px;top:65px" width="16" height="18" viewBox="0 0 16 18"><g transform="translate(0.5,0)"><rect x="3" y="1.5" width="10" height="13" fill="#fff" stroke="#2e2e2e" stroke-width="1"/></g></svg>
<svg style="left:46px;top:65px" width="16" height="18" viewBox="0 0 16 18"><path d="M1 1h6l1.2 1.5H15V15H1z" fill="#2e2e2e"/><path d="M1.8 4h4.6l1-1.2" stroke="#f0f0f0" stroke-width="0.7" fill="none"/><path d="M12.2 13.1h6.8l-3.4 4z" fill="#2e2e2e"/></svg>
<svg style="left:69px;top:65px" width="16" height="18" viewBox="0 0 16 18"><path d="M1 2.2Q1 1 2.2 1H12.5L15 3.5V13.8Q15 15 13.8 15H2.2Q1 15 1 13.8z" fill="#2e2e2e"/><rect x="3.5" y="1.6" width="8.5" height="4" fill="#f0f0f0"/><rect x="9" y="2.2" width="2" height="2.6" fill="#2e2e2e"/><path d="M3 8.5h10M3 10.8h10M3 13.1h10" stroke="#f0f0f0" stroke-width="1.1"/></svg>
<svg style="left:92px;top:65px" width="16" height="18" viewBox="0 0 16 18"><path d="M3 3L13 13M13 3L3 13" stroke="#e8121c" stroke-width="3" stroke-linecap="butt"/></svg>
<svg style="left:115px;top:65px" width="16" height="18" viewBox="0 0 16 18"><rect x="4.6" y="1.2" width="6.8" height="7.5" fill="#2e2e2e"/><path d="M1 7.2h2.6v3.2h8.8V7.2H15V15H1z" fill="#2e2e2e"/></svg>
<svg style="left:138px;top:65px" width="16" height="18" viewBox="0 0 16 18"><rect x="1.5" y="1.5" width="13" height="13" fill="#fafafa" stroke="#2e2e2e" stroke-width="1.2"/><path d="M4 8.2l2.8 2.6L12.3 5" stroke="#2e2e2e" stroke-width="1.9" fill="none"/></svg>
<svg style="left:161px;top:65px" width="16" height="18" viewBox="0 0 16 18"><path d="M6.7 7.6L9.3 9.6L5.6 10.4z" fill="none" stroke="#2e2e2e" stroke-width="0.9" stroke-linejoin="round"/><path d="M6.8 7.4L7 3.4M9.2 9.6L13 9.9M5.6 10.5L3.2 12.9" stroke="#2e2e2e" stroke-width="1.2" stroke-linecap="round"/><path d="M7 4.6V2.2M11.6 9.9H14M4 12.2L2.4 13.6" stroke="#2e2e2e" stroke-width="2.1" stroke-linecap="round"/></svg>
<svg style="left:196px;top:65px" width="16" height="18" viewBox="0 0 16 18"><g ><path d="M3.0 9.2A5 5 0 1 0 8 5.2" stroke="#2e2e2e" stroke-width="1.7" fill="none" stroke-linecap="round"/><path d="M2.4 4.8L8.6 0.8V8.6z" fill="#2e2e2e"/></g></svg>
<svg style="left:219px;top:65px" width="16" height="18" viewBox="0 0 16 18"><g transform="translate(16,0) scale(-1,1)"><path d="M3.0 9.2A5 5 0 1 0 8 5.2" stroke="#808080" stroke-width="1.7" fill="none" stroke-linecap="round"/><path d="M2.4 4.8L8.6 0.8V8.6z" fill="#808080"/></g></svg>
<svg style="left:242px;top:65px" width="16" height="18" viewBox="0 0 16 18"><path d="M4.6 1.2L9.8 11.3M11.4 1.2L6.2 11.3" stroke="#808080" stroke-width="1.2" fill="none"/><circle cx="5" cy="12.9" r="1.6" fill="none" stroke="#808080" stroke-width="1.1"/><circle cx="11" cy="12.9" r="1.6" fill="none" stroke="#808080" stroke-width="1.1"/></svg>
<svg style="left:265px;top:65px" width="16" height="18" viewBox="0 0 16 18"><rect x="2.5" y="1.5" width="9" height="11" fill="#f0f0f0" stroke="#808080" stroke-width="1"/><rect x="4.2" y="3.6" width="10" height="11.4" fill="#808080"/></svg>
<svg style="left:288px;top:65px" width="16" height="18" viewBox="0 0 16 18"><rect x="2.5" y="1.5" width="9" height="11" fill="#f0f0f0" stroke="#808080" stroke-width="1"/><rect x="4.2" y="3.6" width="10" height="11.4" fill="#808080"/><path d="M8 5.6h2.6v3.4h2L9.3 12.8 6 9h2z" fill="#f0f0f0"/></svg>
<div class="a" style="left:320px;top:62px;width:23px;height:22px;background:#a9cef2;border:1px solid #5b9bd8"></div>
<svg style="left:323px;top:65px" width="16" height="18" viewBox="0 0 16 18"><g transform="translate(0.5,0)"><path d="M3.9 1.4V13L6.5 10.6 9 16.4 11.2 15.5 8.8 10 12.3 9.6z" fill="#2e2e2e"/></g></svg>
<div class="t" style="left:347.4px;top:62.8px;font-family:'Liberation Serif',serif;font-weight:bold;font-size:20px;color:#2e2e2e">T</div>
<svg style="left:369px;top:65px" width="16" height="18" viewBox="0 0 16 18"><rect x="1.6" y="1.6" width="12.8" height="12.8" fill="#fafafa" stroke="#2e2e2e" stroke-width="1.2"/><circle cx="5.2" cy="5.2" r="1.7" fill="#2e2e2e"/><path d="M3 12.6V10.4l2.6-2 2.3 1.6 3.2-3.2L13 9v3.6z" fill="#2e2e2e"/></svg>
<svg style="left:392px;top:65px" width="16" height="18" viewBox="0 0 16 18"><g transform="translate(0.5,0)"><path d="M8 0.6l1.25 3h-2.5z" fill="#2e2e2e" transform="rotate(0 8 8.2)"/><path d="M8 0.6l1.25 3h-2.5z" fill="#2e2e2e" transform="rotate(36 8 8.2)"/><path d="M8 0.6l1.25 3h-2.5z" fill="#2e2e2e" transform="rotate(72 8 8.2)"/><path d="M8 0.6l1.25 3h-2.5z" fill="#2e2e2e" transform="rotate(108 8 8.2)"/><path d="M8 0.6l1.25 3h-2.5z" fill="#2e2e2e" transform="rotate(144 8 8.2)"/><path d="M8 0.6l1.25 3h-2.5z" fill="#2e2e2e" transform="rotate(180 8 8.2)"/><path d="M8 0.6l1.25 3h-2.5z" fill="#2e2e2e" transform="rotate(216 8 8.2)"/><path d="M8 0.6l1.25 3h-2.5z" fill="#2e2e2e" transform="rotate(252 8 8.2)"/><path d="M8 0.6l1.25 3h-2.5z" fill="#2e2e2e" transform="rotate(288 8 8.2)"/><path d="M8 0.6l1.25 3h-2.5z" fill="#2e2e2e" transform="rotate(324 8 8.2)"/><circle cx="8" cy="8.2" r="4.15" fill="#f6f6f6" stroke="#2e2e2e" stroke-width="1.5"/></g></svg>
<svg style="left:415px;top:65px" width="16" height="18" viewBox="0 0 16 18"><rect x="1.5" y="1.5" width="13" height="13" fill="#fafafa" stroke="#2e2e2e" stroke-width="1.2"/><rect x="1" y="1" width="14" height="2.5" fill="#2e2e2e"/><path d="M1 7.1h14M1 11.1h14" stroke="#2e2e2e" stroke-width="1.1"/></svg>
<svg style="left:438px;top:65px" width="16" height="18" viewBox="0 0 16 18"><rect x="1.5" y="1.5" width="13" height="13" fill="#fafafa" stroke="#2e2e2e" stroke-width="1.1"/><rect x="3.3" y="3.3" width="9.4" height="9.4" fill="#2e2e2e"/><path d="M12.6 13.1h6.8l-3.4 4z" fill="#2e2e2e"/></svg>
<svg style="left:461px;top:65px" width="16" height="18" viewBox="0 0 16 18"><g transform="translate(0.5,0)"><path d="M7.90 1.20L9.78 6.41L15.32 6.59L10.94 9.99L12.48 15.31L7.90 12.20L3.32 15.31L4.86 9.99L0.48 6.59L6.02 6.41z" fill="#2e2e2e"/><path d="M12.2 13.1h6.6l-3.3 4z" fill="#2e2e2e"/></g></svg>
<svg style="left:484px;top:65px" width="16" height="18" viewBox="0 0 16 18"><path d="M10.85 2.16A6.5 6.5 0 1 0 14.27 8.47" stroke="#2e2e2e" stroke-width="1.1" fill="none"/><path d="M9.2 7.2L10.6 3.5A5.1 5.1 0 1 0 12.9 8.1z" fill="#2e2e2e"/></svg>
<svg style="left:507px;top:65px" width="16" height="18" viewBox="0 0 16 18"><g transform="translate(0.5,0)"><path d="M6.78 6.65L6.85 6.55L6.94 6.46L7.06 6.39L7.21 6.34L7.38 6.33L7.55 6.35L7.73 6.41L7.91 6.52L8.06 6.66L8.20 6.85L8.29 7.06L8.35 7.31L8.36 7.57L8.31 7.85L8.21 8.12L8.06 8.38L7.84 8.61L7.58 8.80L7.27 8.95L6.93 9.04L6.57 9.07L6.19 9.03L5.82 8.91L5.46 8.72L5.13 8.46L4.86 8.13L4.64 7.74L4.49 7.31L4.42 6.85L4.44 6.36L4.55 5.88L4.75 5.42L5.04 4.98L5.42 4.60L5.87 4.29L6.38 4.06L6.93 3.93L7.52 3.90L8.11 3.98L8.69 4.17L9.24 4.46L9.74 4.87L10.16 5.36L10.49 5.94L10.71 6.58L10.82 7.26L10.80 7.96L10.65 8.66L10.36 9.34L9.96 9.96L9.44 10.50L8.81 10.95L8.11 11.28L7.34 11.49L6.53 11.55L5.72 11.46L4.92 11.22L4.17 10.83L3.48 10.31L2.90 9.66L2.44 8.91L2.12 8.07L1.95 7.17L1.95 6.25L2.12 5.32L2.46 4.43L2.96 3.61L3.61 2.88L4.39 2.28L5.28 1.82L6.26 1.52L7.28 1.41L8.32 1.48L9.34 1.74L10.31 2.19L11.19 2.82L11.95 3.61L12.57 4.53L13.01 5.56L13.26 6.66L13.31 7.81L13.15 8.96L12.78 10.07L12.20 11.11L11.44 12.03L10.52 12.82L9.45 13.42L8.28 13.83L7.05 14.03L5.78 13.99" stroke="#2e2e2e" stroke-width="1.25" fill="none" stroke-linecap="round" stroke-linejoin="round"/></g></svg>
<svg style="left:530px;top:65px" width="16" height="18" viewBox="0 0 16 18"><path d="M2.9 13.1L13.1 3" stroke="#2e2e2e" stroke-width="2" stroke-linecap="round"/></svg>
<svg style="left:553px;top:65px" width="16" height="18" viewBox="0 0 16 18"><g transform="rotate(45 8 8)"><path d="M5.6 -0.3h4.8v2H5.6z" fill="#2e2e2e"/><path d="M5.4 2.5h5.2l1.8 5.8L8 17.6 3.6 8.3z" fill="#2e2e2e"/><path d="M8 8.6v8.4" stroke="#f0f0f0" stroke-width="0.9"/></g></svg>
<svg style="left:576px;top:65px" width="16" height="18" viewBox="0 0 16 18"><g transform="rotate(45 8 8)"><path d="M5.25 -0.5h5.5v2.1h-5.5z" fill="#2e2e2e"/><path d="M5.25 2.5h5.5v9.8h-5.5z" fill="#2e2e2e"/><path d="M5.25 13.3h5.5L8 17.9z" fill="#2e2e2e"/></g></svg>
<svg style="left:599px;top:65px" width="16" height="18" viewBox="0 0 16 18"><path d="M14.5 1.3L16.9 3.7 9.9 10.7 7.5 8.3z" fill="#2e2e2e"/><path d="M6.5 8.2L9.9 11.6C9.4 15 4.4 16.2.2 14.8 3.4 13.8 3.4 9.4 6.5 8.2z" fill="#2e2e2e"/><path d="M11.9 13.1h7.3l-3.65 3.9z" fill="#2e2e2e"/></svg>
<svg style="left:622px;top:65px" width="16" height="18" viewBox="0 0 16 18"><g transform="translate(0.5,0)"><path d="M2.6 7.2A5.6 5.6 0 0 1 12 4" stroke="#808080" stroke-width="1.9" fill="none"/><path d="M9.6 5.8L14.6 0.8V5.8z" fill="#808080"/><path d="M13.4 8.8A5.6 5.6 0 0 1 4 12" stroke="#808080" stroke-width="1.9" fill="none"/><path d="M6.4 10.2L1.4 15.2V10.2z" fill="#808080"/></g></svg>
<svg style="left:645px;top:65px" width="16" height="18" viewBox="0 0 16 18"><circle cx="6.4" cy="6.4" r="4.6" fill="none" stroke="#2e2e2e" stroke-width="1.7"/><path d="M9.8 9.8L14.6 14.6" stroke="#2e2e2e" stroke-width="2.3"/></svg>
<svg style="left:668px;top:65px" width="16" height="18" viewBox="0 0 16 18"><rect x="1.5" y="1.5" width="13" height="13" fill="none" stroke="#808080" stroke-width="1"/></svg>
<div class="t" style="left:671.8px;top:66px;font-family:'Liberation Serif',serif;font-weight:bold;font-size:14.5px;color:#808080;transform:scaleX(0.87);transform-origin:0 0">T</div>
<div class="t" style="left:691.0px;top:64.5px;font-family:'Liberation Serif',serif;font-weight:bold;font-size:17.5px;color:#808080;transform:scaleX(0.92);transform-origin:0 0">T</div>
<svg style="left:704px;top:65px" width="3" height="16" viewBox="0 0 3 16" ><path d="M0 1.500h3M1.500 1.500v13M0 14.500h3" stroke="#808080" stroke-width="1" fill="none"/></svg>
<svg style="left:714px;top:65px" width="16" height="18" viewBox="0 0 16 18"><rect x="1" y="1" width="6" height="14" fill="#808080"/><rect x="9" y="1" width="6" height="14" fill="#808080"/><rect x="3" y="6" width="10" height="4" fill="#f0f0f0" stroke="#808080" stroke-width="0"/><path d="M4.4 8h1.8M7.1 8h1.8M9.8 8h1.8" stroke="#808080" stroke-width="1.3"/></svg>
<svg style="left:737px;top:65px" width="16" height="18" viewBox="0 0 16 18"><rect x="1.5" y="1.5" width="5" height="13" fill="none" stroke="#808080" stroke-width="1"/><rect x="9.5" y="1.5" width="5" height="13" fill="none" stroke="#808080" stroke-width="1"/><rect x="3.5" y="6.5" width="4" height="3" fill="none" stroke="#808080" stroke-width="1"/><rect x="8.5" y="6.5" width="4" height="3" fill="none" stroke="#808080" stroke-width="1"/></svg>
<svg style="left:760px;top:65px" width="16" height="18" viewBox="0 0 16 18"><g transform="translate(0.5,0)"><path d="M8.1 0.8v1.8" stroke="#2e2e2e" stroke-width="1.3"/><circle cx="7.9" cy="5.6" r="1.45" fill="none" stroke="#2e2e2e" stroke-width="1.6"/><path d="M5.5 8.5L1.9 13.8M10.5 8.5L14.3 13.8" stroke="#2e2e2e" stroke-width="1.8"/></g></svg>
<svg style="left:783px;top:65px" width="16" height="18" viewBox="0 0 16 18"><rect x="1" y="1" width="14" height="1.8" fill="#808080"/><rect x="1" y="5.3" width="14" height="9.4" fill="#808080"/><path d="M8.00 6.10L9.03 8.88L11.99 9.00L9.66 10.84L10.47 13.70L8.00 12.05L5.53 13.70L6.34 10.84L4.01 9.00L6.97 8.88z" fill="#f0f0f0"/></svg>
<svg style="left:806px;top:65px" width="16" height="18" viewBox="0 0 16 18"><g transform="rotate(45 8 8)"><rect x="6" y="-0.4" width="4" height="5" fill="#2e2e2e"/><rect x="4.2" y="4.3" width="7.6" height="1.5" fill="#2e2e2e"/><rect x="6.4" y="5.8" width="3.2" height="8.1" fill="#2e2e2e"/><rect x="6.7" y="14.8" width="2.6" height="2.4" fill="#2e2e2e"/></g></svg>
<svg style="left:829px;top:65px" width="16" height="18" viewBox="0 0 16 18"><rect x="1.75" y="1.75" width="12.5" height="12.5" fill="#fff" stroke="#2e2e2e" stroke-width="1.5"/><rect x="3.3" y="3" width="1" height="9.7" fill="#2e2e2e"/><rect x="12.4" y="3" width="1" height="9.7" fill="#2e2e2e"/><rect x="5.6" y="3" width="0.9" height="8.3" fill="#2e2e2e"/><rect x="7.5" y="3" width="1" height="8.3" fill="#2e2e2e"/><rect x="9.8" y="3" width="2.1" height="8.3" fill="#2e2e2e"/><rect x="5.3" y="11.9" width="5.8" height="0.8" fill="#2e2e2e"/></svg>
<svg style="left:864px;top:65px" width="16" height="18" viewBox="0 0 16 18"><rect x="1.5" y="1.5" width="13" height="13" fill="#fafafa" stroke="#2e2e2e" stroke-width="1"/><rect x="3.5" y="3.5" width="9" height="9" fill="#f4f4f4" stroke="#2e2e2e" stroke-width="1"/></svg>
<svg style="left:887px;top:65px" width="16" height="18" viewBox="0 0 16 18"><rect x="1.5" y="1.5" width="13" height="13" fill="#fafafa" stroke="#2e2e2e" stroke-width="1"/><path d="M4 8.2l2.8 2.6L12.3 5" stroke="#2e2e2e" stroke-width="1.9" fill="none"/></svg>
<svg style="left:910px;top:65px" width="16" height="18" viewBox="0 0 16 18"><g transform="translate(0.5,0)"><circle cx="8" cy="8.5" r="4.6" fill="#f4f4f4" stroke="#2e2e2e" stroke-width="2"/><circle cx="8" cy="8.5" r="1.8" fill="#2e2e2e"/></g></svg>
<svg style="left:933px;top:65px" width="16" height="18" viewBox="0 0 16 18"><rect x="1.5" y="1.5" width="13" height="13" fill="#fafafa" stroke="#2e2e2e" stroke-width="1"/><path d="M8 5.5h5M3.5 8.5h9.5M3.5 11.5h9.5" stroke="#2e2e2e" stroke-width="1"/><path d="M3.6 7V4.6Q3.6 3.5 4.6 3.5T5.6 4.6V7M3.6 5.6h2" stroke="#2e2e2e" stroke-width="0.9" fill="none"/></svg>
<svg style="left:956px;top:65px" width="16" height="18" viewBox="0 0 16 18"><rect x="1.5" y="1.5" width="12" height="3.5" fill="#fafafa" stroke="#2e2e2e" stroke-width="1"/><rect x="12.5" y="1.5" width="2.5" height="3" fill="#fafafa" stroke="#2e2e2e" stroke-width="1"/><rect x="1.5" y="5" width="10" height="9.500" fill="#fafafa" stroke="#2e2e2e" stroke-width="1"/><path d="M3.5 6.500h6M3.500 12.500h6" stroke="#2e2e2e" stroke-width="1"/><rect x="3.500" y="8.500" width="6" height="2.200" fill="#2e2e2e"/></svg>
<svg style="left:979px;top:65px" width="16" height="18" viewBox="0 0 16 18"><rect x="1.5" y="1.5" width="13" height="13" fill="#fafafa" stroke="#2e2e2e" stroke-width="1"/><path d="M11.5 1.5v13" stroke="#2e2e2e" stroke-width="1"/><rect x="12" y="5.6" width="2.500" height="4.800" fill="#2e2e2e"/><path d="M3.500 3.500h6M3.500 9.500h6M3.500 12.500h6" stroke="#2e2e2e" stroke-width="1"/><rect x="3.200" y="5.400" width="6.600" height="2.500" fill="#2e2e2e"/></svg>
<svg style="left:1002px;top:65px" width="16" height="18" viewBox="0 0 16 18"><path d="M1.5 1.5H11L14.5 5V14.5H1.5z" fill="#fafafa" stroke="#2e2e2e" stroke-width="1"/><path d="M11 1.5V5h3.5" fill="none" stroke="#2e2e2e" stroke-width="0.9"/><path d="M3.500 8.500h9M3.500 11.500h9" stroke="#2e2e2e" stroke-width="1"/><path d="M3.600 6.800V4.600Q3.600 3.500 4.600 3.500T5.600 4.600V6.800M3.600 5.500h2" stroke="#2e2e2e" stroke-width="0.900" fill="none"/></svg>
<svg style="left:1025px;top:65px" width="16" height="18" viewBox="0 0 16 18"><g transform="translate(8.15 8.05) rotate(-44)" fill="none" stroke="#2e2e2e" stroke-width="1.300"><rect x="-6.600" y="-2.850" width="6.300" height="5.700"/><rect x="0.300" y="-2.850" width="6.300" height="5.700"/><path d="M-3.600 0h7.200" stroke-width="1.700"/></g></svg>
<div class="a" style="left:1057px;top:63px;width:56px;height:19px;background:linear-gradient(#f2f2f2,#e4e4e4);border:1px solid #b8b8b8"></div>
<div class="t" style="left:1062px;top:70px;font-size:9px;color:#000;">Normal</div>
<svg style="left:1100px;top:70px" width="8" height="5" viewBox="0 0 8 5" ><path d="M0 0h8L4 4.6z" fill="#111"/></svg>
<div class="a" style="left:1113px;top:62px;width:23px;height:22px;background:#a9cef2;border:1px solid #5b9bd8"></div>
<svg style="left:1117px;top:66px" width="16" height="15" viewBox="0 0 16 15" ><rect x="0.75" y="0.75" width="13.5" height="9.5" fill="#fff" stroke="#222" stroke-width="1.5"/><rect x="1.5" y="1.5" width="6" height="4" fill="#00a0e8"/><rect x="7.5" y="1.5" width="6" height="4" fill="#e8109c"/><rect x="1.5" y="5.5" width="6" height="4" fill="#f4e800"/><rect x="7.5" y="5.5" width="6" height="4" fill="#111"/><rect x="4.5" y="12" width="6" height="1.6" fill="#1a3a5a"/></svg>
<svg style="left:1139px;top:65px" width="16" height="18" viewBox="0 0 16 18"><path d="M0.2 8.4Q8 0.6 15.8 8.4Q8 15.4 0.2 8.4z" fill="#1e1e1e"/><circle cx="8" cy="8.2" r="3.1" fill="#f0f0f0"/><circle cx="8" cy="8.2" r="1.6" fill="#1e1e1e"/></svg>
<svg style="left:1162px;top:65px" width="16" height="18" viewBox="0 0 16 18"><rect x="1.5" y="1.5" width="13" height="13" fill="#f4f4f4" stroke="#808080" stroke-width="1"/><g transform="rotate(45 8 8)"><path d="M6.4 2h3.2v2H6.4zM6 4.6h4l1 3.6L8 14 5 8.2z" fill="#808080"/></g></svg>
<div class="a" style="left:1182px;top:63px;width:115px;height:19px;background:#f0f0f0;border:1px solid #d4d4d4"></div>
<div class="t" style="left:1187px;top:70px;font-size:9px;color:#8a8a8a;">Normal Vision</div>
<svg style="left:1284px;top:71px" width="8" height="5" viewBox="0 0 8 5" ><path d="M0 0h8L4 4.4z" fill="#a0a0a0"/></svg>
<div class="a" style="left:1660px;top:87px;width:1px;height:877px;background:#fcfcfc"></div>
<div class="a" style="left:1661px;top:87px;width:15px;height:877px;background:#f0f0f0"></div>
<div class="a" style="left:1661px;top:104px;width:15px;height:615px;background:#cdcdcd"></div>
<svg style="left:1664px;top:93px" width="10" height="6" viewBox="0 0 10 6" ><path d="M1.3 5.4L4.8 1.9 8.3 5.4" stroke="#555" stroke-width="2" fill="none"/></svg>
<svg style="left:1664px;top:952px" width="10" height="6" viewBox="0 0 10 6" ><path d="M1.3 0.6L4.8 4.1 8.3 0.6" stroke="#555" stroke-width="2" fill="none"/></svg>
<div class="a" style="left:1676px;top:87px;width:1px;height:921px;background:#f6f6f6"></div>
<div class="a" style="left:10px;top:963px;width:1667px;height:1px;background:#fcfcfc"></div>
<div class="a" style="left:10px;top:964px;width:1667px;height:16px;background:#f0f0f0"></div>
<svg style="left:16px;top:967px" width="7" height="9" viewBox="0 0 7 9" ><path d="M5.2 1.2L1.8 4.6 5.2 8" stroke="#b8b8b8" stroke-width="2" fill="none"/></svg>
<svg style="left:1649px;top:967px" width="7" height="9" viewBox="0 0 7 9" ><path d="M1.2 1.2L4.6 4.6 1.2 8" stroke="#b8b8b8" stroke-width="2" fill="none"/></svg>
<div class="a" style="left:10px;top:980px;width:1667px;height:1px;background:#8c8c8c"></div>
<div class="a" style="left:10px;top:981px;width:1667px;height:27px;background:#f0f0f0"></div>
<div class="a" style="left:477px;top:984px;width:1px;height:22px;background:#d9d9d9"></div>
<div class="a" style="left:478px;top:984px;width:1px;height:22px;background:#fbfbfb"></div>
<div class="a" style="left:575px;top:984px;width:1px;height:22px;background:#d9d9d9"></div>
<div class="a" style="left:576px;top:984px;width:1px;height:22px;background:#fbfbfb"></div>
<div class="a" style="left:675px;top:984px;width:1px;height:22px;background:#d9d9d9"></div>
<div class="a" style="left:676px;top:984px;width:1px;height:22px;background:#fbfbfb"></div>
<div class="a" style="left:818px;top:984px;width:1px;height:22px;background:#d9d9d9"></div>
<div class="a" style="left:819px;top:984px;width:1px;height:22px;background:#fbfbfb"></div>
<div class="a" style="left:986px;top:984px;width:1px;height:22px;background:#d9d9d9"></div>
<div class="a" style="left:987px;top:984px;width:1px;height:22px;background:#fbfbfb"></div>
<div class="a" style="left:1375px;top:984px;width:1px;height:22px;background:#d9d9d9"></div>
<div class="a" style="left:1376px;top:984px;width:1px;height:22px;background:#fbfbfb"></div>
<div class="a" style="left:1389px;top:984px;width:1px;height:22px;background:#d9d9d9"></div>
<div class="a" style="left:1390px;top:984px;width:1px;height:22px;background:#fbfbfb"></div>
<div class="a" style="left:1437px;top:984px;width:1px;height:22px;background:#d9d9d9"></div>
<div class="a" style="left:1438px;top:984px;width:1px;height:22px;background:#fbfbfb"></div>
<div class="a" style="left:1453px;top:984px;width:1px;height:22px;background:#d9d9d9"></div>
<div class="a" style="left:1454px;top:984px;width:1px;height:22px;background:#fbfbfb"></div>
<div class="a" style="left:1501px;top:984px;width:1px;height:22px;background:#d9d9d9"></div>
<div class="a" style="left:1502px;top:984px;width:1px;height:22px;background:#fbfbfb"></div>
<div class="a" style="left:679px;top:986px;width:74px;height:18px;background:#fff;border:1px solid #ababab"></div>
<div class="t" style="left:684px;top:991.5px;font-size:9px;color:#000;letter-spacing:0.15px">100.00 %</div>
<div class="a" style="left:737px;top:988px;width:14px;height:14px;border:1px solid #c9c9c9;background:#f3f3f3"></div>
<div class="a" style="left:737px;top:995px;width:14px;height:1px;background:#c9c9c9"></div>
<svg style="left:741px;top:990px" width="6" height="10" viewBox="0 0 6 10" ><path d="M0.2 3.4h5.6L3 0.2z M0.2 6.6h5.6L3 9.8z" fill="#222"/></svg>
<svg style="left:756px;top:987px" width="16" height="16" viewBox="0 0 16 16" ><circle cx="6.6" cy="6.6" r="4.9" fill="#f4f4f4" stroke="#333" stroke-width="1.5"/><path d="M10.3 10.3L14.6 14.6" stroke="#333" stroke-width="2.2"/><path d="M4 6.6h5.2" stroke="#333" stroke-width="1.5"/></svg>
<svg style="left:777px;top:987px" width="16" height="16" viewBox="0 0 16 16" ><circle cx="6.6" cy="6.6" r="4.9" fill="#f4f4f4" stroke="#333" stroke-width="1.5"/><path d="M10.3 10.3L14.6 14.6" stroke="#333" stroke-width="2.2"/><circle cx="6.6" cy="6.6" r="2" fill="#333"/></svg>
<svg style="left:798px;top:987px" width="16" height="16" viewBox="0 0 16 16" ><circle cx="6.6" cy="6.6" r="4.9" fill="#f4f4f4" stroke="#333" stroke-width="1.5"/><path d="M10.3 10.3L14.6 14.6" stroke="#333" stroke-width="2.2"/><path d="M4 6.6h5.2M6.6 4v5.2" stroke="#333" stroke-width="1.5"/></svg>
<svg style="left:824px;top:988px" width="17" height="14" viewBox="0 0 17 14" ><rect x="0" y="0.5" width="2" height="12.5" fill="#808080"/><path d="M3 6.8L9.4 0.6V4.6H16V9H9.4V13z" fill="#808080"/></svg>
<svg style="left:846px;top:988px" width="15" height="14" viewBox="0 0 15 14" ><path d="M0.4 6.8L7 0.6V4.6H14V9H7V13z" fill="#808080"/></svg>
<div class="a" style="left:864px;top:984px;width:59px;height:22px;background:#fff;border:1px solid #8e8e8e"></div>
<div class="a" style="left:906px;top:985px;width:16px;height:20px;background:linear-gradient(#e9e9e9,#d6d6d6);border-left:1px solid #adadad"></div>
<div class="t" style="left:883px;top:991.5px;font-size:10px;color:#000;">1</div>
<svg style="left:909px;top:989px" width="11" height="13" viewBox="0 0 11 13" ><path d="M3.4 0.4H7.6V6.2H10.8L5.5 12.6 0.2 6.2H3.4z" fill="#2a2a2a"/></svg>
<div class="t" style="left:927px;top:990.5px;font-size:9px;color:#000;">of 1</div>
<svg style="left:947px;top:988px" width="15" height="14" viewBox="0 0 15 14" ><path d="M14.4 6.8L7.8 0.6V4.6H0.6V9H7.8V13z" fill="#808080"/></svg>
<svg style="left:967px;top:988px" width="17" height="14" viewBox="0 0 17 14" ><rect x="14.6" y="0.5" width="2" height="12.5" fill="#808080"/><path d="M13.6 6.8L7.2 0.6V4.6H0.4V9H7.2V13z" fill="#808080"/></svg>
<div class="a" style="left:991px;top:984px;width:98px;height:22px;background:linear-gradient(#ececec,#dcdcdc);border:1px solid #9a9a9a"></div>
<div class="a" style="left:1072px;top:985px;width:1px;height:20px;background:#adadad"></div>
<div class="a" style="left:996px;top:989px;width:16px;height:12px;background:#000"></div>
<div class="t" style="left:1016px;top:990.5px;font-size:9px;color:#000;">Background</div>
<svg style="left:1075px;top:989px" width="11" height="13" viewBox="0 0 11 13" ><path d="M3.4 0.4H7.6V6.2H10.8L5.5 12.6 0.2 6.2H3.4z" fill="#2a2a2a"/></svg>
<div class="t" style="left:1379px;top:990.5px;font-size:9px;color:#000;">X:</div>
<div class="t" style="left:1393px;top:990.5px;font-size:9px;color:#000;">83.255</div>
<div class="t" style="left:1442px;top:990.5px;font-size:9px;color:#000;">Y:</div>
<div class="t" style="left:1457px;top:990.5px;font-size:9px;color:#000;">30.250</div>
<div class="a" style="left:1506px;top:984px;width:46px;height:22px;background:linear-gradient(#e6e6e6,#d8d8d8);border:1px solid #9a9a9a"></div>
<div class="a" style="left:1535px;top:985px;width:1px;height:20px;background:#adadad"></div>
<div class="t" style="left:1511px;top:990.5px;font-size:9px;color:#000;">mm</div>
<svg style="left:1538px;top:989px" width="11" height="13" viewBox="0 0 11 13" ><path d="M3.4 0.4H7.6V6.2H10.8L5.5 12.6 0.2 6.2H3.4z" fill="#2a2a2a"/></svg>
<div class="a" style="left:1558px;top:985px;width:100px;height:19px;background:#e6e6e6;border:1px solid #bcbcbc"></div>
<svg style="left:1666px;top:996px" width="10" height="10" viewBox="0 0 10 10" ><rect x="8" y="0" width="2" height="2" fill="#b8b8b8"/><rect x="4" y="4" width="2" height="2" fill="#b8b8b8"/><rect x="8" y="4" width="2" height="2" fill="#b8b8b8"/><rect x="0" y="8" width="2" height="2" fill="#b8b8b8"/><rect x="4" y="8" width="2" height="2" fill="#b8b8b8"/><rect x="8" y="8" width="2" height="2" fill="#b8b8b8"/></svg>
<div class="a" style="left:0px;top:1010px;width:1680px;height:6px;background:#487dae"></div>
<div class="a" style="left:0px;top:1010px;width:2px;height:6px;background:#3f719f"></div>
<div class="a" style="left:0px;top:1016px;width:1680px;height:34px;background:radial-gradient(ellipse 90px 9px at 60px 1028px,rgba(120,170,215,.35),rgba(120,170,215,0)),radial-gradient(ellipse 260px 10px at 700px 22px,rgba(130,170,205,.28),rgba(130,170,205,0)),radial-gradient(ellipse 300px 8px at 900px 8px,rgba(15,40,70,.45),rgba(15,40,70,0)),radial-gradient(ellipse 220px 7px at 520px 12px,rgba(15,40,70,.35),rgba(15,40,70,0)),radial-gradient(ellipse 240px 9px at 1120px 10px,rgba(120,165,205,.25),rgba(120,165,205,0)),radial-gradient(ellipse 200px 8px at 1400px 24px,rgba(125,165,200,.25),rgba(125,165,200,0)),radial-gradient(ellipse 260px 7px at 1250px 30px,rgba(15,40,70,.35),rgba(15,40,70,0)),radial-gradient(ellipse 180px 8px at 300px 6px,rgba(120,165,205,.2),rgba(120,165,205,0)),radial-gradient(ellipse 200px 8px at 820px 30px,rgba(110,150,190,.2),rgba(110,150,190,0)),linear-gradient(#2b5a84,#2a5780 50%,#27537b)"></div>
<svg style="left:12px;top:1017px" width="27" height="26" viewBox="0 0 27 26" ><path d="M0 3.6L11 2v10.4H0zM12.4 1.8L26.4 0v12.4h-14zM0 13.8h11v10.4L0 22.6zM12.4 13.8h14V26l-14-1.8z" fill="#fff"/></svg>
<div class="a" style="left:65px;top:1014px;width:32px;height:32px;background:linear-gradient(#3a3a3a,#0a0a0a 30%,#000);border-radius:5px"></div>
<svg style="left:67px;top:1017px" width="28" height="26" viewBox="0 0 28 26" ><path d="M4 3.500q3-2 6 0q2-2.500 5 0l1.500 3.500-2.500 4.500H6.500L3 8.500z" fill="#e2244e"/><path d="M14.500 6.500l4-3.500q2.500-.5 4 1.500l2 4-1 4.500-5 2-4.500-3z" fill="#f4c414"/><path d="M2.500 12.500l4.500-2.500 5.500 2.500 1 4-3 5-5 1.500-4-5z" fill="#1b4fc4"/><path d="M12.500 13.500l5-1.500 5.500 3 .5 5-4 4-5.500-.5-3-5z" fill="#6db52c"/></svg>
<div class="a" style="left:128px;top:1015px;width:31px;height:30px;background:#0b9a10"></div>
<svg style="left:131px;top:1017px" width="24" height="26" viewBox="0 0 24 26" ><path d="M7 8.500V6a4.600 4.600 0 0 1 9.200 0V8.500" stroke="#fff" stroke-width="1.400" fill="none"/><path d="M1.200 8.400l21.600-1-1.800 17.400L3 23z" fill="#fff"/><path d="M5.600 12.600l5-.6v4.600H5.600zM11.600 11.900l5.600-.7v5.400h-5.600zM5.600 17.600h5v4.600l-5-.7zM11.600 17.600h5.600v5.200l-5.600-.7z" fill="#0b9a10"/></svg>
<div class="a" style="left:176px;top:1011px;width:58px;height:38px;background:rgba(255,255,255,.22);border:1px solid rgba(255,255,255,.38)"></div>
<div class="a" style="left:238px;top:1011px;width:58px;height:38px;background:rgba(255,255,255,.22);border:1px solid rgba(255,255,255,.38)"></div>
<div class="a" style="left:300px;top:1011px;width:58px;height:38px;background:rgba(255,255,255,.22);border:1px solid rgba(255,255,255,.38)"></div>
<div class="a" style="left:362px;top:1011px;width:58px;height:38px;background:rgba(225,232,240,.52);border:1px solid rgba(255,255,255,.78)"></div>
<svg style="left:190px;top:1015px" width="30" height="30" viewBox="0 0 30 30" ><circle cx="15" cy="15" r="14.5" fill="#fff"/><path d="M15 15L2.45 7.75A14.5 14.5 0 0 1 27.55 7.75z" fill="#db4437"/><path d="M15 15L27.55 7.75A14.5 14.5 0 0 1 15 29.5z" fill="#ffcd40"/><path d="M15 15L15 29.5A14.5 14.5 0 0 1 2.45 7.75z" fill="#0f9d58"/><circle cx="15" cy="15" r="6.8" fill="#fff"/><circle cx="15" cy="15" r="5.4" fill="#4285f4"/></svg>
<svg style="left:251px;top:1016px" width="32" height="28" viewBox="0 0 32 28" ><path d="M1 3h9l2 2h14v4H1z" fill="#e8c662"/><rect x="4" y="1.5" width="3" height="2" fill="#3aa33a"/><rect x="13" y="3.5" width="3" height="2" fill="#cc3b2e"/><rect x="20" y="5.5" width="3" height="2" fill="#3b7dd8"/><path d="M0.5 8h31v19h-31z" fill="#f6dc8a"/><path d="M0.5 8h31v3h-31z" fill="#fbe9ae"/><path d="M6 27V17h20v10h-4v-6H10v6z" fill="#5ab0e6"/><path d="M6 17h20v2H6z" fill="#9ad4f6"/></svg>
<svg style="left:314px;top:1018px" width="31" height="28" viewBox="0 0 31 28" ><g transform="scale(1.1,0.95)"><rect x="0.5" y="0.5" width="27" height="21" rx="1.5" fill="#3583cc"/><rect x="2" y="2" width="24" height="18" fill="#46a0e4"/><circle cx="9" cy="8" r="4.2" fill="none" stroke="#dff1ff" stroke-width="1.6"/><path d="M9 8V3.8A4.2 4.2 0 0 1 13 7z" fill="#f2a33a"/><rect x="16" y="4.5" width="8" height="3" fill="none" stroke="#e8f4ff" stroke-width="1.2"/><rect x="16" y="10.5" width="8" height="3" fill="none" stroke="#e8f4ff" stroke-width="1.2"/><circle cx="6" cy="15.5" r="1.2" fill="#e8f4ff"/><ellipse cx="13" cy="26" rx="6.2" ry="3.6" fill="#d9d9d9"/><ellipse cx="13" cy="25" rx="4.4" ry="2.6" fill="#f4f4f4"/></g></svg>
<svg style="left:375px;top:1014px" width="32" height="32" viewBox="0 0 32 32"><circle cx="15" cy="17" r="14.6" fill="#174f80"/><circle cx="15" cy="16.6" r="13.4" fill="#2a76bb"/><path d="M3.4 11Q7.6 4.2 16 3.6Q13.6 10 15.4 17T12.6 29.6Q7.4 22 3.4 11z" fill="#9ccbee"/><path d="M16 3.6Q13.6 10 15.4 17T12.6 29.6Q11 17 12.4 5z" fill="#5fa8e0" opacity=".85"/><path d="M24.2 3.6l4.6 3.6-5.4 10.2-9.2 11.4 2-13.2z" fill="#b88c34"/><path d="M24.6 6l2 1.6-4.8 8.8-5.4 7 1.6-9z" fill="#f0d584"/><path d="M20.8 13.2l-5.6 13" stroke="#7a5a1c" stroke-width=".9"/><path d="M23.6 1.8l3.2-.8 3.6 4-1.6 2.4z" fill="#2e2418"/></svg>
<svg style="left:12px;top:13px" width="17" height="17" viewBox="0 0 32 32"><circle cx="15" cy="17" r="14.6" fill="#174f80"/><circle cx="15" cy="16.6" r="13.4" fill="#2a76bb"/><path d="M3.4 11Q7.6 4.2 16 3.6Q13.6 10 15.4 17T12.6 29.6Q7.4 22 3.4 11z" fill="#9ccbee"/><path d="M16 3.6Q13.6 10 15.4 17T12.6 29.6Q11 17 12.4 5z" fill="#5fa8e0" opacity=".85"/><path d="M24.2 3.6l4.6 3.6-5.4 10.2-9.2 11.4 2-13.2z" fill="#b88c34"/><path d="M24.6 6l2 1.6-4.8 8.8-5.4 7 1.6-9z" fill="#f0d584"/><path d="M20.8 13.2l-5.6 13" stroke="#7a5a1c" stroke-width=".9"/><path d="M23.6 1.8l3.2-.8 3.6 4-1.6 2.4z" fill="#2e2418"/></svg>
<svg style="left:10px;top:41px" width="18" height="18" viewBox="0 0 32 32"><circle cx="15" cy="17" r="14.6" fill="#174f80"/><circle cx="15" cy="16.6" r="13.4" fill="#2a76bb"/><path d="M3.4 11Q7.6 4.2 16 3.6Q13.6 10 15.4 17T12.6 29.6Q7.4 22 3.4 11z" fill="#9ccbee"/><path d="M16 3.6Q13.6 10 15.4 17T12.6 29.6Q11 17 12.4 5z" fill="#5fa8e0" opacity=".85"/><path d="M24.2 3.6l4.6 3.6-5.4 10.2-9.2 11.4 2-13.2z" fill="#b88c34"/><path d="M24.6 6l2 1.6-4.8 8.8-5.4 7 1.6-9z" fill="#f0d584"/><path d="M20.8 13.2l-5.6 13" stroke="#7a5a1c" stroke-width=".9"/><path d="M23.6 1.8l3.2-.8 3.6 4-1.6 2.4z" fill="#2e2418"/></svg>
<div class="t" style="left:1187px;top:1023.5px;font-size:12px;color:#f4f6f8;">Desktop</div>
<svg style="left:1237px;top:1019px" width="17" height="11" viewBox="0 0 17 11" ><path d="M3.6 10.6a3.2 3.2 0 0 1 .4-6.2 4.6 4.6 0 0 1 8.6-.6 3.5 3.5 0 0 1 .8 6.8z" fill="#1c5fc0"/></svg>
<div class="t" style="left:1257.5px;top:1018.5px;font-size:12px;color:#f4f6f8;width:21.5px;overflow:hidden">One</div>
<div class="t" style="left:1287px;top:1011.5px;font-size:15px;color:#f4f6f8;font-weight:bold">»</div>
<svg style="left:1303px;top:1014px" width="32" height="32" viewBox="0 0 32 32" ><circle cx="16" cy="16" r="14.6" fill="#1b9ad8" stroke="#fff" stroke-width="2.6"/><path d="M11 12.4Q11 7.6 16 7.6T21 12Q21 14.4 18.4 15.8Q16.4 17 16.4 19.4" stroke="#fff" stroke-width="3" fill="none"/><circle cx="16.4" cy="23.6" r="1.9" fill="#fff"/></svg>
<svg style="left:1342px;top:1022px" width="14" height="18" viewBox="0 0 14 18" ><circle cx="6.6" cy="10.4" r="6.2" fill="#d8432e"/><path d="M3.4 10.6h6.4a3.2 3.2 0 1 0-1 2.4" stroke="#fff" stroke-width="1.5" fill="none"/><path d="M5 3.2A4.8 4.8 0 0 1 12.6 4" stroke="#e8e8e8" stroke-width="1.2" fill="none"/></svg>
<svg style="left:1365px;top:1022px" width="17" height="17" viewBox="0 0 17 17" ><circle cx="8.5" cy="8.5" r="8" fill="#d8e6f6"/><circle cx="8.5" cy="8.5" r="6.4" fill="#2a6fd0"/><path d="M4.6 8.4A4 4 0 0 1 11.6 6M12.4 8.8A4 4 0 0 1 5.4 11" stroke="#fff" stroke-width="1.5" fill="none"/><path d="M10.4 6.6l2.6.2-.2-2.6zM6.6 10.4l-2.6-.2.2 2.6z" fill="#fff"/></svg>
<svg style="left:1389px;top:1023px" width="17" height="17" viewBox="0 0 17 17" ><rect x="4.5" y="1.5" width="11" height="8" fill="none" stroke="#fff" stroke-width="1.4"/><path d="M10 9.6v3M6.6 13.4h7" stroke="#fff" stroke-width="1.4"/><rect x="0.8" y="0.8" width="4.4" height="6" fill="#1f4d73" stroke="#fff" stroke-width="1.2"/><path d="M3 6.8v9" stroke="#fff" stroke-width="1.3"/></svg>
<svg style="left:1413px;top:1025px" width="17" height="12" viewBox="0 0 17 12" ><path d="M3.8 11.4a3.4 3.4 0 0 1 .3-6.6 4.8 4.8 0 0 1 8.9-.4 3.7 3.7 0 0 1 .8 7z" fill="#fff"/></svg>
<svg style="left:1437px;top:1022px" width="16" height="17" viewBox="0 0 16 17" ><path d="M1 5l7-3.4L15 5v7.6L8 16 1 12.6z" fill="#d8d8d8" stroke="#555" stroke-width=".8"/><path d="M1 5l7 3.4L15 5M8 8.4V16" stroke="#555" stroke-width=".8" fill="none"/><ellipse cx="8" cy="5" rx="3.4" ry="1.6" fill="#8a8a8a"/></svg>
<svg style="left:1461px;top:1022px" width="17" height="18" viewBox="0 0 17 18" ><rect x="3.4" y="0.6" width="4.4" height="4" fill="#bdbdbd"/><rect x="2" y="4.4" width="7.2" height="9" rx="1.2" fill="#8e8e8e"/><circle cx="11.4" cy="12.4" r="4.8" fill="#2fa33a"/><path d="M8.8 12.4l2 2 3.2-3.8" stroke="#fff" stroke-width="1.4" fill="none"/></svg>
<svg style="left:1485px;top:1022px" width="18" height="18" viewBox="0 0 18 18" ><circle cx="7.6" cy="9.4" r="7" fill="#e8b820"/><circle cx="7.6" cy="9.4" r="4" fill="#fff6c8"/><path d="M5 9l2.6 2.8L14.6 1.6" stroke="#1a1a1a" stroke-width="1.6" fill="none"/><circle cx="13" cy="13.4" r="4" fill="#2fa33a"/><path d="M11 13.4l1.5 1.6 2.5-3" stroke="#fff" stroke-width="1.2" fill="none"/></svg>
<svg style="left:1509px;top:1023px" width="17" height="18" viewBox="0 0 17 18" ><path d="M2 1v16" stroke="#fff" stroke-width="1.8"/><path d="M3.4 2.4h5.2l1 1.6h5.6l-2 3.2 2 3.2H8.6l-1-1.6H3.4z" fill="#fff"/></svg>
<svg style="left:1533px;top:1024px" width="17" height="16" viewBox="0 0 17 16" ><path d="M1 5.4h3L8.4 1.4v13.2L4 10.6H1z" fill="#fff"/><path d="M10.4 5.2a3.6 3.6 0 0 1 0 5.6M12.6 3a6.6 6.6 0 0 1 0 10" stroke="#fff" stroke-width="1.2" fill="none"/></svg>
<div class="t" style="left:1563.5px;top:1024.5px;font-size:12px;color:#f4f6f8;letter-spacing:-0.8px">ENG</div>
<div class="t" style="left:1619.5px;top:1017px;font-size:12px;color:#f4f6f8;letter-spacing:-0.7px">17:22</div>
<div class="t" style="left:1603px;top:1033.5px;font-size:12px;color:#f4f6f8;letter-spacing:-0.2px">20/08/2016</div>
</div></body></html>
